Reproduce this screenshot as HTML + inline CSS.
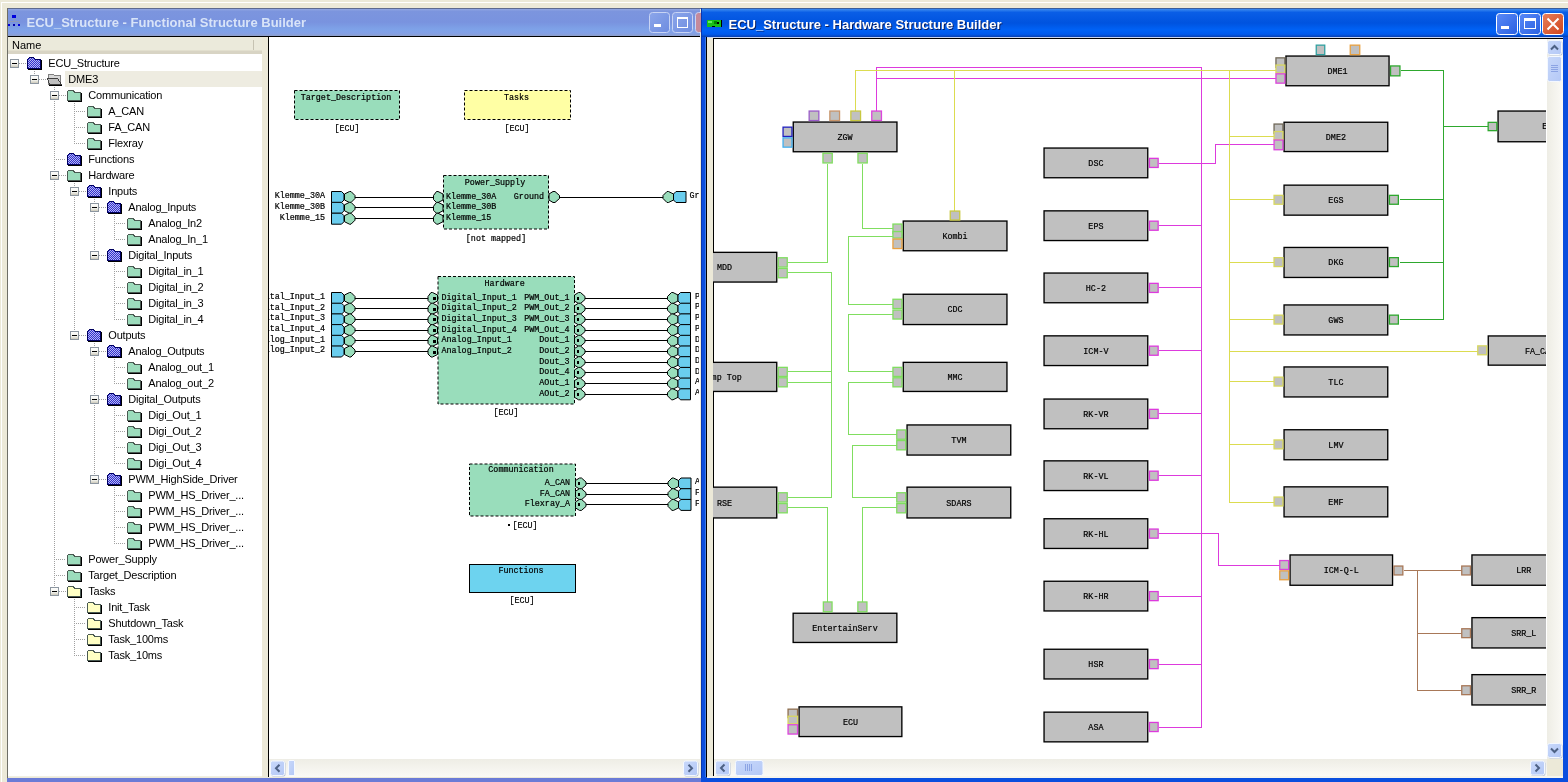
<!DOCTYPE html><html><head><meta charset="utf-8"><style>html,body{margin:0;padding:0;width:1568px;height:782px;overflow:hidden;background:#ECE9D8}svg{display:block;will-change:transform}text{white-space:pre}</style></head><body>
<svg width="1568" height="782" viewBox="0 0 1568 782" shape-rendering="crispEdges">
<defs>
<linearGradient id="tInact" x1="0" y1="0" x2="0" y2="1">
<stop offset="0" stop-color="#97ABE4"/><stop offset="0.1" stop-color="#7C95DE"/><stop offset="0.5" stop-color="#7993DF"/><stop offset="0.75" stop-color="#7EA2E8"/><stop offset="0.9" stop-color="#83A0E6"/><stop offset="1" stop-color="#8E9FCB"/>
</linearGradient>
<linearGradient id="tAct" x1="0" y1="0" x2="0" y2="1">
<stop offset="0" stop-color="#3D8CF0"/><stop offset="0.12" stop-color="#0A5EE6"/><stop offset="0.5" stop-color="#0053DF"/><stop offset="0.75" stop-color="#0062F6"/><stop offset="0.9" stop-color="#005AEE"/><stop offset="1" stop-color="#0840B0"/>
</linearGradient>
<linearGradient id="sbH" x1="0" y1="0" x2="0" y2="1">
<stop offset="0" stop-color="#EEEDE5"/><stop offset="1" stop-color="#FBFAF6"/>
</linearGradient>
<linearGradient id="sbV" x1="0" y1="0" x2="1" y2="0">
<stop offset="0" stop-color="#EEEDE5"/><stop offset="1" stop-color="#FBFAF6"/>
</linearGradient>
<linearGradient id="btn" x1="0" y1="0" x2="1" y2="1">
<stop offset="0" stop-color="#C8D8FA"/><stop offset="1" stop-color="#B4C8F6"/>
</linearGradient>
<linearGradient id="exp" x1="0" y1="0" x2="0" y2="1"><stop offset="0" stop-color="#FFFFFF"/><stop offset="0.6" stop-color="#F0F0EA"/><stop offset="1" stop-color="#C6C2B2"/></linearGradient>
<pattern id="hatch" width="2" height="2" patternUnits="userSpaceOnUse"><rect width="2" height="2" fill="#3030D0"/><rect width="1" height="1" fill="#B8B8F0"/><rect x="1" y="1" width="1" height="1" fill="#B8B8F0"/></pattern>
<clipPath id="clipTree"><rect x="8" y="53" width="254" height="723"/></clipPath>
<clipPath id="clipFD"><rect x="269" y="37" width="430" height="722"/></clipPath>
<clipPath id="clipHD"><rect x="713" y="39" width="833" height="720"/></clipPath>
<linearGradient id="minB" x1="0" y1="0" x2="1" y2="1"><stop offset="0" stop-color="#5A8AF8"/><stop offset="1" stop-color="#2A60E0"/></linearGradient>
<linearGradient id="clsB" x1="0" y1="0" x2="1" y2="1"><stop offset="0" stop-color="#E8805C"/><stop offset="1" stop-color="#D0441C"/></linearGradient>
<linearGradient id="minI" x1="0" y1="0" x2="1" y2="1"><stop offset="0" stop-color="#8CA6EA"/><stop offset="1" stop-color="#6D8CE0"/></linearGradient>
</defs>
<rect x="0" y="0" width="1568" height="782" fill="#ECE9D8" stroke="none" stroke-width="1" />
<line x1="1" y1="2.5" x2="1568" y2="2.5" stroke="#FFFFFF" stroke-width="1" />
<line x1="1.5" y1="2" x2="1.5" y2="782" stroke="#FFFFFF" stroke-width="1" />
<rect x="7" y="7.5" width="694" height="1" fill="#5E6A8E" stroke="none" stroke-width="1" />
<rect x="7" y="8" width="1" height="774" fill="#6E6E66" stroke="none" stroke-width="1" />
<rect x="8" y="8.5" width="692" height="27.5" fill="url(#tInact)" stroke="none" stroke-width="1" />
<rect x="8" y="36" width="692" height="1" fill="#000000" stroke="none" stroke-width="1" />
<rect x="12" y="15" width="4" height="3" fill="#0000DD" stroke="none" stroke-width="1" />
<rect x="8" y="24" width="2" height="2" fill="#0000DD" stroke="none" stroke-width="1" />
<rect x="13" y="24" width="2" height="2" fill="#0000AA" stroke="none" stroke-width="1" />
<rect x="18" y="24" width="2" height="2" fill="#0000DD" stroke="none" stroke-width="1" />
<line x1="9" y1="21.5" x2="19" y2="21.5" stroke="#8C9AB8" stroke-width="1" />
<line x1="14" y1="18" x2="14" y2="21" stroke="#8C9AB8" stroke-width="1" />
<line x1="9" y1="21" x2="9" y2="24" stroke="#8C9AB8" stroke-width="1" />
<line x1="19" y1="21" x2="19" y2="24" stroke="#8C9AB8" stroke-width="1" />
<text x="26.5" y="27" font-family="Liberation Sans" font-size="13" font-weight="bold" text-anchor="start" fill="#D8E4F8" >ECU_Structure - Functional Structure Builder</text>
<rect x="649.5" y="12.5" width="20" height="20" rx="3" fill="url(#minI)" stroke="#C8D4F4" stroke-width="1" shape-rendering="geometricPrecision"/>
<rect x="672.5" y="12.5" width="20" height="20" rx="3" fill="url(#minI)" stroke="#C8D4F4" stroke-width="1" shape-rendering="geometricPrecision"/>
<rect x="695.5" y="12.5" width="20" height="20" rx="3" fill="#C48A9C" stroke="#C8D4F4" stroke-width="1" shape-rendering="geometricPrecision"/>
<rect x="654" y="24" width="7" height="3" fill="#FFFFFF" stroke="none" stroke-width="1" />
<rect x="677.5" y="17.5" width="10" height="10" fill="none" stroke="#FFFFFF" stroke-width="1"/>
<rect x="677" y="17" width="11" height="2" fill="#FFFFFF" stroke="none" stroke-width="1" />
<rect x="8" y="37" width="254" height="17" fill="#EBEADB" stroke="none" stroke-width="1" />
<rect x="8" y="50" width="254" height="1" fill="#E2DFCE" stroke="none" stroke-width="1" />
<rect x="8" y="51" width="254" height="3" fill="#D8D4C4" stroke="none" stroke-width="1" />
<line x1="253.5" y1="40" x2="253.5" y2="50" stroke="#C6C3B2" stroke-width="1" />
<text x="12" y="49" font-family="Liberation Sans" font-size="11" font-weight="normal" text-anchor="start" fill="#000" >Name</text>
<rect x="8" y="54" width="254" height="722" fill="#FFFFFF" stroke="none" stroke-width="1" />
<rect x="8" y="776" width="254" height="1" fill="#F1EFE2" stroke="none" stroke-width="1" />
<rect x="262" y="37" width="6" height="740" fill="#ECE9D8" stroke="none" stroke-width="1" />
<rect x="268" y="37" width="1" height="740" fill="#000000" stroke="none" stroke-width="1" />
<rect x="7" y="777.5" width="694" height="5" fill="#6B7BD6" stroke="none" stroke-width="1" />
<g clip-path="url(#clipTree)">
<rect x="65" y="71" width="197" height="16" fill="#EEECE1" stroke="none" stroke-width="1" />
<line x1="34.5" y1="69" x2="34.5" y2="79.5" stroke="#A0A0A0" stroke-width="1" stroke-dasharray="1,1"/>
<line x1="19" y1="63.5" x2="26" y2="63.5" stroke="#A0A0A0" stroke-width="1" stroke-dasharray="1,1"/>
<line x1="54.5" y1="85" x2="54.5" y2="591.5" stroke="#A0A0A0" stroke-width="1" stroke-dasharray="1,1"/>
<line x1="39" y1="79.5" x2="46" y2="79.5" stroke="#A0A0A0" stroke-width="1" stroke-dasharray="1,1"/>
<line x1="74.5" y1="101" x2="74.5" y2="143.5" stroke="#A0A0A0" stroke-width="1" stroke-dasharray="1,1"/>
<line x1="59" y1="95.5" x2="66" y2="95.5" stroke="#A0A0A0" stroke-width="1" stroke-dasharray="1,1"/>
<line x1="74" y1="111.5" x2="86" y2="111.5" stroke="#A0A0A0" stroke-width="1" stroke-dasharray="1,1"/>
<line x1="74" y1="127.5" x2="86" y2="127.5" stroke="#A0A0A0" stroke-width="1" stroke-dasharray="1,1"/>
<line x1="74" y1="143.5" x2="86" y2="143.5" stroke="#A0A0A0" stroke-width="1" stroke-dasharray="1,1"/>
<line x1="54" y1="159.5" x2="66" y2="159.5" stroke="#A0A0A0" stroke-width="1" stroke-dasharray="1,1"/>
<line x1="74.5" y1="181" x2="74.5" y2="335.5" stroke="#A0A0A0" stroke-width="1" stroke-dasharray="1,1"/>
<line x1="59" y1="175.5" x2="66" y2="175.5" stroke="#A0A0A0" stroke-width="1" stroke-dasharray="1,1"/>
<line x1="94.5" y1="197" x2="94.5" y2="255.5" stroke="#A0A0A0" stroke-width="1" stroke-dasharray="1,1"/>
<line x1="79" y1="191.5" x2="86" y2="191.5" stroke="#A0A0A0" stroke-width="1" stroke-dasharray="1,1"/>
<line x1="114.5" y1="213" x2="114.5" y2="239.5" stroke="#A0A0A0" stroke-width="1" stroke-dasharray="1,1"/>
<line x1="99" y1="207.5" x2="106" y2="207.5" stroke="#A0A0A0" stroke-width="1" stroke-dasharray="1,1"/>
<line x1="114" y1="223.5" x2="126" y2="223.5" stroke="#A0A0A0" stroke-width="1" stroke-dasharray="1,1"/>
<line x1="114" y1="239.5" x2="126" y2="239.5" stroke="#A0A0A0" stroke-width="1" stroke-dasharray="1,1"/>
<line x1="114.5" y1="261" x2="114.5" y2="319.5" stroke="#A0A0A0" stroke-width="1" stroke-dasharray="1,1"/>
<line x1="99" y1="255.5" x2="106" y2="255.5" stroke="#A0A0A0" stroke-width="1" stroke-dasharray="1,1"/>
<line x1="114" y1="271.5" x2="126" y2="271.5" stroke="#A0A0A0" stroke-width="1" stroke-dasharray="1,1"/>
<line x1="114" y1="287.5" x2="126" y2="287.5" stroke="#A0A0A0" stroke-width="1" stroke-dasharray="1,1"/>
<line x1="114" y1="303.5" x2="126" y2="303.5" stroke="#A0A0A0" stroke-width="1" stroke-dasharray="1,1"/>
<line x1="114" y1="319.5" x2="126" y2="319.5" stroke="#A0A0A0" stroke-width="1" stroke-dasharray="1,1"/>
<line x1="94.5" y1="341" x2="94.5" y2="479.5" stroke="#A0A0A0" stroke-width="1" stroke-dasharray="1,1"/>
<line x1="79" y1="335.5" x2="86" y2="335.5" stroke="#A0A0A0" stroke-width="1" stroke-dasharray="1,1"/>
<line x1="114.5" y1="357" x2="114.5" y2="383.5" stroke="#A0A0A0" stroke-width="1" stroke-dasharray="1,1"/>
<line x1="99" y1="351.5" x2="106" y2="351.5" stroke="#A0A0A0" stroke-width="1" stroke-dasharray="1,1"/>
<line x1="114" y1="367.5" x2="126" y2="367.5" stroke="#A0A0A0" stroke-width="1" stroke-dasharray="1,1"/>
<line x1="114" y1="383.5" x2="126" y2="383.5" stroke="#A0A0A0" stroke-width="1" stroke-dasharray="1,1"/>
<line x1="114.5" y1="405" x2="114.5" y2="463.5" stroke="#A0A0A0" stroke-width="1" stroke-dasharray="1,1"/>
<line x1="99" y1="399.5" x2="106" y2="399.5" stroke="#A0A0A0" stroke-width="1" stroke-dasharray="1,1"/>
<line x1="114" y1="415.5" x2="126" y2="415.5" stroke="#A0A0A0" stroke-width="1" stroke-dasharray="1,1"/>
<line x1="114" y1="431.5" x2="126" y2="431.5" stroke="#A0A0A0" stroke-width="1" stroke-dasharray="1,1"/>
<line x1="114" y1="447.5" x2="126" y2="447.5" stroke="#A0A0A0" stroke-width="1" stroke-dasharray="1,1"/>
<line x1="114" y1="463.5" x2="126" y2="463.5" stroke="#A0A0A0" stroke-width="1" stroke-dasharray="1,1"/>
<line x1="114.5" y1="485" x2="114.5" y2="543.5" stroke="#A0A0A0" stroke-width="1" stroke-dasharray="1,1"/>
<line x1="99" y1="479.5" x2="106" y2="479.5" stroke="#A0A0A0" stroke-width="1" stroke-dasharray="1,1"/>
<line x1="114" y1="495.5" x2="126" y2="495.5" stroke="#A0A0A0" stroke-width="1" stroke-dasharray="1,1"/>
<line x1="114" y1="511.5" x2="126" y2="511.5" stroke="#A0A0A0" stroke-width="1" stroke-dasharray="1,1"/>
<line x1="114" y1="527.5" x2="126" y2="527.5" stroke="#A0A0A0" stroke-width="1" stroke-dasharray="1,1"/>
<line x1="114" y1="543.5" x2="126" y2="543.5" stroke="#A0A0A0" stroke-width="1" stroke-dasharray="1,1"/>
<line x1="54" y1="559.5" x2="66" y2="559.5" stroke="#A0A0A0" stroke-width="1" stroke-dasharray="1,1"/>
<line x1="54" y1="575.5" x2="66" y2="575.5" stroke="#A0A0A0" stroke-width="1" stroke-dasharray="1,1"/>
<line x1="74.5" y1="597" x2="74.5" y2="655.5" stroke="#A0A0A0" stroke-width="1" stroke-dasharray="1,1"/>
<line x1="59" y1="591.5" x2="66" y2="591.5" stroke="#A0A0A0" stroke-width="1" stroke-dasharray="1,1"/>
<line x1="74" y1="607.5" x2="86" y2="607.5" stroke="#A0A0A0" stroke-width="1" stroke-dasharray="1,1"/>
<line x1="74" y1="623.5" x2="86" y2="623.5" stroke="#A0A0A0" stroke-width="1" stroke-dasharray="1,1"/>
<line x1="74" y1="639.5" x2="86" y2="639.5" stroke="#A0A0A0" stroke-width="1" stroke-dasharray="1,1"/>
<line x1="74" y1="655.5" x2="86" y2="655.5" stroke="#A0A0A0" stroke-width="1" stroke-dasharray="1,1"/>
<rect x="10.5" y="59.5" width="8" height="8" fill="url(#exp)" stroke="#8C96A0" stroke-width="1"/>
<rect x="12" y="63" width="5" height="1" fill="#000" stroke="none" stroke-width="1" />
<path d="M27.5,68.5 V59.5 L29.5,57.5 H33.5 L35.5,59.5 H40.5 V68.5 Z" fill="url(#hatch)" stroke="#000060" stroke-width="1"/>
<rect x="28" y="69" width="14" height="1" fill="#000" stroke="none" stroke-width="1" />
<rect x="41" y="60" width="1" height="10" fill="#000" stroke="none" stroke-width="1" />
<text x="48.3" y="67" font-family="Liberation Sans" font-size="11" font-weight="normal" text-anchor="start" fill="#000" letter-spacing="-0.2">ECU_Structure</text>
<rect x="30.5" y="75.5" width="8" height="8" fill="url(#exp)" stroke="#8C96A0" stroke-width="1"/>
<rect x="32" y="79" width="5" height="1" fill="#000" stroke="none" stroke-width="1" />
<path d="M48.5,84.5 V74.5 H53.5 L54.5,75.5 H60.5 V84.5 Z" fill="#D8D8D8" stroke="#808080" stroke-width="1"/>
<path d="M47.5,78.5 H57.5 L61.5,84.5 H49.5 Z" fill="#C0C0C0" stroke="#404040" stroke-width="1"/>
<rect x="49" y="85" width="13" height="1" fill="#000" stroke="none" stroke-width="1" />
<text x="68.3" y="83" font-family="Liberation Sans" font-size="11" font-weight="normal" text-anchor="start" fill="#000" letter-spacing="-0.2">DME3</text>
<rect x="50.5" y="91.5" width="8" height="8" fill="url(#exp)" stroke="#8C96A0" stroke-width="1"/>
<rect x="52" y="95" width="5" height="1" fill="#000" stroke="none" stroke-width="1" />
<path d="M67.5,100.5 V91.5 L68.5,90.5 H73.5 L74.5,92.5 H80.5 V100.5 Z" fill="#9CDCBC" stroke="#4A5A52" stroke-width="1"/>
<rect x="68" y="101" width="14" height="1" fill="#000" stroke="none" stroke-width="1" />
<rect x="81" y="93" width="1" height="9" fill="#000" stroke="none" stroke-width="1" />
<text x="88.3" y="99" font-family="Liberation Sans" font-size="11" font-weight="normal" text-anchor="start" fill="#000" letter-spacing="-0.2">Communication</text>
<path d="M87.5,116.5 V107.5 L88.5,106.5 H93.5 L94.5,108.5 H100.5 V116.5 Z" fill="#9CDCBC" stroke="#4A5A52" stroke-width="1"/>
<rect x="88" y="117" width="14" height="1" fill="#000" stroke="none" stroke-width="1" />
<rect x="101" y="109" width="1" height="9" fill="#000" stroke="none" stroke-width="1" />
<text x="108.3" y="115" font-family="Liberation Sans" font-size="11" font-weight="normal" text-anchor="start" fill="#000" letter-spacing="-0.2">A_CAN</text>
<path d="M87.5,132.5 V123.5 L88.5,122.5 H93.5 L94.5,124.5 H100.5 V132.5 Z" fill="#9CDCBC" stroke="#4A5A52" stroke-width="1"/>
<rect x="88" y="133" width="14" height="1" fill="#000" stroke="none" stroke-width="1" />
<rect x="101" y="125" width="1" height="9" fill="#000" stroke="none" stroke-width="1" />
<text x="108.3" y="131" font-family="Liberation Sans" font-size="11" font-weight="normal" text-anchor="start" fill="#000" letter-spacing="-0.2">FA_CAN</text>
<path d="M87.5,148.5 V139.5 L88.5,138.5 H93.5 L94.5,140.5 H100.5 V148.5 Z" fill="#9CDCBC" stroke="#4A5A52" stroke-width="1"/>
<rect x="88" y="149" width="14" height="1" fill="#000" stroke="none" stroke-width="1" />
<rect x="101" y="141" width="1" height="9" fill="#000" stroke="none" stroke-width="1" />
<text x="108.3" y="147" font-family="Liberation Sans" font-size="11" font-weight="normal" text-anchor="start" fill="#000" letter-spacing="-0.2">Flexray</text>
<path d="M67.5,164.5 V155.5 L69.5,153.5 H73.5 L75.5,155.5 H80.5 V164.5 Z" fill="url(#hatch)" stroke="#000060" stroke-width="1"/>
<rect x="68" y="165" width="14" height="1" fill="#000" stroke="none" stroke-width="1" />
<rect x="81" y="156" width="1" height="10" fill="#000" stroke="none" stroke-width="1" />
<text x="88.3" y="163" font-family="Liberation Sans" font-size="11" font-weight="normal" text-anchor="start" fill="#000" letter-spacing="-0.2">Functions</text>
<rect x="50.5" y="171.5" width="8" height="8" fill="url(#exp)" stroke="#8C96A0" stroke-width="1"/>
<rect x="52" y="175" width="5" height="1" fill="#000" stroke="none" stroke-width="1" />
<path d="M67.5,180.5 V171.5 L68.5,170.5 H73.5 L74.5,172.5 H80.5 V180.5 Z" fill="#9CDCBC" stroke="#4A5A52" stroke-width="1"/>
<rect x="68" y="181" width="14" height="1" fill="#000" stroke="none" stroke-width="1" />
<rect x="81" y="173" width="1" height="9" fill="#000" stroke="none" stroke-width="1" />
<text x="88.3" y="179" font-family="Liberation Sans" font-size="11" font-weight="normal" text-anchor="start" fill="#000" letter-spacing="-0.2">Hardware</text>
<rect x="70.5" y="187.5" width="8" height="8" fill="url(#exp)" stroke="#8C96A0" stroke-width="1"/>
<rect x="72" y="191" width="5" height="1" fill="#000" stroke="none" stroke-width="1" />
<path d="M87.5,196.5 V187.5 L89.5,185.5 H93.5 L95.5,187.5 H100.5 V196.5 Z" fill="url(#hatch)" stroke="#000060" stroke-width="1"/>
<rect x="88" y="197" width="14" height="1" fill="#000" stroke="none" stroke-width="1" />
<rect x="101" y="188" width="1" height="10" fill="#000" stroke="none" stroke-width="1" />
<text x="108.3" y="195" font-family="Liberation Sans" font-size="11" font-weight="normal" text-anchor="start" fill="#000" letter-spacing="-0.2">Inputs</text>
<rect x="90.5" y="203.5" width="8" height="8" fill="url(#exp)" stroke="#8C96A0" stroke-width="1"/>
<rect x="92" y="207" width="5" height="1" fill="#000" stroke="none" stroke-width="1" />
<path d="M107.5,212.5 V203.5 L109.5,201.5 H113.5 L115.5,203.5 H120.5 V212.5 Z" fill="url(#hatch)" stroke="#000060" stroke-width="1"/>
<rect x="108" y="213" width="14" height="1" fill="#000" stroke="none" stroke-width="1" />
<rect x="121" y="204" width="1" height="10" fill="#000" stroke="none" stroke-width="1" />
<text x="128.3" y="211" font-family="Liberation Sans" font-size="11" font-weight="normal" text-anchor="start" fill="#000" letter-spacing="-0.2">Analog_Inputs</text>
<path d="M127.5,228.5 V219.5 L128.5,218.5 H133.5 L134.5,220.5 H140.5 V228.5 Z" fill="#9CDCBC" stroke="#4A5A52" stroke-width="1"/>
<rect x="128" y="229" width="14" height="1" fill="#000" stroke="none" stroke-width="1" />
<rect x="141" y="221" width="1" height="9" fill="#000" stroke="none" stroke-width="1" />
<text x="148.3" y="227" font-family="Liberation Sans" font-size="11" font-weight="normal" text-anchor="start" fill="#000" letter-spacing="-0.2">Analog_In2</text>
<path d="M127.5,244.5 V235.5 L128.5,234.5 H133.5 L134.5,236.5 H140.5 V244.5 Z" fill="#9CDCBC" stroke="#4A5A52" stroke-width="1"/>
<rect x="128" y="245" width="14" height="1" fill="#000" stroke="none" stroke-width="1" />
<rect x="141" y="237" width="1" height="9" fill="#000" stroke="none" stroke-width="1" />
<text x="148.3" y="243" font-family="Liberation Sans" font-size="11" font-weight="normal" text-anchor="start" fill="#000" letter-spacing="-0.2">Analog_In_1</text>
<rect x="90.5" y="251.5" width="8" height="8" fill="url(#exp)" stroke="#8C96A0" stroke-width="1"/>
<rect x="92" y="255" width="5" height="1" fill="#000" stroke="none" stroke-width="1" />
<path d="M107.5,260.5 V251.5 L109.5,249.5 H113.5 L115.5,251.5 H120.5 V260.5 Z" fill="url(#hatch)" stroke="#000060" stroke-width="1"/>
<rect x="108" y="261" width="14" height="1" fill="#000" stroke="none" stroke-width="1" />
<rect x="121" y="252" width="1" height="10" fill="#000" stroke="none" stroke-width="1" />
<text x="128.3" y="259" font-family="Liberation Sans" font-size="11" font-weight="normal" text-anchor="start" fill="#000" letter-spacing="-0.2">Digital_Inputs</text>
<path d="M127.5,276.5 V267.5 L128.5,266.5 H133.5 L134.5,268.5 H140.5 V276.5 Z" fill="#9CDCBC" stroke="#4A5A52" stroke-width="1"/>
<rect x="128" y="277" width="14" height="1" fill="#000" stroke="none" stroke-width="1" />
<rect x="141" y="269" width="1" height="9" fill="#000" stroke="none" stroke-width="1" />
<text x="148.3" y="275" font-family="Liberation Sans" font-size="11" font-weight="normal" text-anchor="start" fill="#000" letter-spacing="-0.2">Digital_in_1</text>
<path d="M127.5,292.5 V283.5 L128.5,282.5 H133.5 L134.5,284.5 H140.5 V292.5 Z" fill="#9CDCBC" stroke="#4A5A52" stroke-width="1"/>
<rect x="128" y="293" width="14" height="1" fill="#000" stroke="none" stroke-width="1" />
<rect x="141" y="285" width="1" height="9" fill="#000" stroke="none" stroke-width="1" />
<text x="148.3" y="291" font-family="Liberation Sans" font-size="11" font-weight="normal" text-anchor="start" fill="#000" letter-spacing="-0.2">Digital_in_2</text>
<path d="M127.5,308.5 V299.5 L128.5,298.5 H133.5 L134.5,300.5 H140.5 V308.5 Z" fill="#9CDCBC" stroke="#4A5A52" stroke-width="1"/>
<rect x="128" y="309" width="14" height="1" fill="#000" stroke="none" stroke-width="1" />
<rect x="141" y="301" width="1" height="9" fill="#000" stroke="none" stroke-width="1" />
<text x="148.3" y="307" font-family="Liberation Sans" font-size="11" font-weight="normal" text-anchor="start" fill="#000" letter-spacing="-0.2">Digital_in_3</text>
<path d="M127.5,324.5 V315.5 L128.5,314.5 H133.5 L134.5,316.5 H140.5 V324.5 Z" fill="#9CDCBC" stroke="#4A5A52" stroke-width="1"/>
<rect x="128" y="325" width="14" height="1" fill="#000" stroke="none" stroke-width="1" />
<rect x="141" y="317" width="1" height="9" fill="#000" stroke="none" stroke-width="1" />
<text x="148.3" y="323" font-family="Liberation Sans" font-size="11" font-weight="normal" text-anchor="start" fill="#000" letter-spacing="-0.2">Digital_in_4</text>
<rect x="70.5" y="331.5" width="8" height="8" fill="url(#exp)" stroke="#8C96A0" stroke-width="1"/>
<rect x="72" y="335" width="5" height="1" fill="#000" stroke="none" stroke-width="1" />
<path d="M87.5,340.5 V331.5 L89.5,329.5 H93.5 L95.5,331.5 H100.5 V340.5 Z" fill="url(#hatch)" stroke="#000060" stroke-width="1"/>
<rect x="88" y="341" width="14" height="1" fill="#000" stroke="none" stroke-width="1" />
<rect x="101" y="332" width="1" height="10" fill="#000" stroke="none" stroke-width="1" />
<text x="108.3" y="339" font-family="Liberation Sans" font-size="11" font-weight="normal" text-anchor="start" fill="#000" letter-spacing="-0.2">Outputs</text>
<rect x="90.5" y="347.5" width="8" height="8" fill="url(#exp)" stroke="#8C96A0" stroke-width="1"/>
<rect x="92" y="351" width="5" height="1" fill="#000" stroke="none" stroke-width="1" />
<path d="M107.5,356.5 V347.5 L109.5,345.5 H113.5 L115.5,347.5 H120.5 V356.5 Z" fill="url(#hatch)" stroke="#000060" stroke-width="1"/>
<rect x="108" y="357" width="14" height="1" fill="#000" stroke="none" stroke-width="1" />
<rect x="121" y="348" width="1" height="10" fill="#000" stroke="none" stroke-width="1" />
<text x="128.3" y="355" font-family="Liberation Sans" font-size="11" font-weight="normal" text-anchor="start" fill="#000" letter-spacing="-0.2">Analog_Outputs</text>
<path d="M127.5,372.5 V363.5 L128.5,362.5 H133.5 L134.5,364.5 H140.5 V372.5 Z" fill="#9CDCBC" stroke="#4A5A52" stroke-width="1"/>
<rect x="128" y="373" width="14" height="1" fill="#000" stroke="none" stroke-width="1" />
<rect x="141" y="365" width="1" height="9" fill="#000" stroke="none" stroke-width="1" />
<text x="148.3" y="371" font-family="Liberation Sans" font-size="11" font-weight="normal" text-anchor="start" fill="#000" letter-spacing="-0.2">Analog_out_1</text>
<path d="M127.5,388.5 V379.5 L128.5,378.5 H133.5 L134.5,380.5 H140.5 V388.5 Z" fill="#9CDCBC" stroke="#4A5A52" stroke-width="1"/>
<rect x="128" y="389" width="14" height="1" fill="#000" stroke="none" stroke-width="1" />
<rect x="141" y="381" width="1" height="9" fill="#000" stroke="none" stroke-width="1" />
<text x="148.3" y="387" font-family="Liberation Sans" font-size="11" font-weight="normal" text-anchor="start" fill="#000" letter-spacing="-0.2">Analog_out_2</text>
<rect x="90.5" y="395.5" width="8" height="8" fill="url(#exp)" stroke="#8C96A0" stroke-width="1"/>
<rect x="92" y="399" width="5" height="1" fill="#000" stroke="none" stroke-width="1" />
<path d="M107.5,404.5 V395.5 L109.5,393.5 H113.5 L115.5,395.5 H120.5 V404.5 Z" fill="url(#hatch)" stroke="#000060" stroke-width="1"/>
<rect x="108" y="405" width="14" height="1" fill="#000" stroke="none" stroke-width="1" />
<rect x="121" y="396" width="1" height="10" fill="#000" stroke="none" stroke-width="1" />
<text x="128.3" y="403" font-family="Liberation Sans" font-size="11" font-weight="normal" text-anchor="start" fill="#000" letter-spacing="-0.2">Digital_Outputs</text>
<path d="M127.5,420.5 V411.5 L128.5,410.5 H133.5 L134.5,412.5 H140.5 V420.5 Z" fill="#9CDCBC" stroke="#4A5A52" stroke-width="1"/>
<rect x="128" y="421" width="14" height="1" fill="#000" stroke="none" stroke-width="1" />
<rect x="141" y="413" width="1" height="9" fill="#000" stroke="none" stroke-width="1" />
<text x="148.3" y="419" font-family="Liberation Sans" font-size="11" font-weight="normal" text-anchor="start" fill="#000" letter-spacing="-0.2">Digi_Out_1</text>
<path d="M127.5,436.5 V427.5 L128.5,426.5 H133.5 L134.5,428.5 H140.5 V436.5 Z" fill="#9CDCBC" stroke="#4A5A52" stroke-width="1"/>
<rect x="128" y="437" width="14" height="1" fill="#000" stroke="none" stroke-width="1" />
<rect x="141" y="429" width="1" height="9" fill="#000" stroke="none" stroke-width="1" />
<text x="148.3" y="435" font-family="Liberation Sans" font-size="11" font-weight="normal" text-anchor="start" fill="#000" letter-spacing="-0.2">Digi_Out_2</text>
<path d="M127.5,452.5 V443.5 L128.5,442.5 H133.5 L134.5,444.5 H140.5 V452.5 Z" fill="#9CDCBC" stroke="#4A5A52" stroke-width="1"/>
<rect x="128" y="453" width="14" height="1" fill="#000" stroke="none" stroke-width="1" />
<rect x="141" y="445" width="1" height="9" fill="#000" stroke="none" stroke-width="1" />
<text x="148.3" y="451" font-family="Liberation Sans" font-size="11" font-weight="normal" text-anchor="start" fill="#000" letter-spacing="-0.2">Digi_Out_3</text>
<path d="M127.5,468.5 V459.5 L128.5,458.5 H133.5 L134.5,460.5 H140.5 V468.5 Z" fill="#9CDCBC" stroke="#4A5A52" stroke-width="1"/>
<rect x="128" y="469" width="14" height="1" fill="#000" stroke="none" stroke-width="1" />
<rect x="141" y="461" width="1" height="9" fill="#000" stroke="none" stroke-width="1" />
<text x="148.3" y="467" font-family="Liberation Sans" font-size="11" font-weight="normal" text-anchor="start" fill="#000" letter-spacing="-0.2">Digi_Out_4</text>
<rect x="90.5" y="475.5" width="8" height="8" fill="url(#exp)" stroke="#8C96A0" stroke-width="1"/>
<rect x="92" y="479" width="5" height="1" fill="#000" stroke="none" stroke-width="1" />
<path d="M107.5,484.5 V475.5 L109.5,473.5 H113.5 L115.5,475.5 H120.5 V484.5 Z" fill="url(#hatch)" stroke="#000060" stroke-width="1"/>
<rect x="108" y="485" width="14" height="1" fill="#000" stroke="none" stroke-width="1" />
<rect x="121" y="476" width="1" height="10" fill="#000" stroke="none" stroke-width="1" />
<text x="128.3" y="483" font-family="Liberation Sans" font-size="11" font-weight="normal" text-anchor="start" fill="#000" letter-spacing="-0.2">PWM_HighSide_Driver</text>
<path d="M127.5,500.5 V491.5 L128.5,490.5 H133.5 L134.5,492.5 H140.5 V500.5 Z" fill="#9CDCBC" stroke="#4A5A52" stroke-width="1"/>
<rect x="128" y="501" width="14" height="1" fill="#000" stroke="none" stroke-width="1" />
<rect x="141" y="493" width="1" height="9" fill="#000" stroke="none" stroke-width="1" />
<text x="148.3" y="499" font-family="Liberation Sans" font-size="11" font-weight="normal" text-anchor="start" fill="#000" letter-spacing="-0.2">PWM_HS_Driver_...</text>
<path d="M127.5,516.5 V507.5 L128.5,506.5 H133.5 L134.5,508.5 H140.5 V516.5 Z" fill="#9CDCBC" stroke="#4A5A52" stroke-width="1"/>
<rect x="128" y="517" width="14" height="1" fill="#000" stroke="none" stroke-width="1" />
<rect x="141" y="509" width="1" height="9" fill="#000" stroke="none" stroke-width="1" />
<text x="148.3" y="515" font-family="Liberation Sans" font-size="11" font-weight="normal" text-anchor="start" fill="#000" letter-spacing="-0.2">PWM_HS_Driver_...</text>
<path d="M127.5,532.5 V523.5 L128.5,522.5 H133.5 L134.5,524.5 H140.5 V532.5 Z" fill="#9CDCBC" stroke="#4A5A52" stroke-width="1"/>
<rect x="128" y="533" width="14" height="1" fill="#000" stroke="none" stroke-width="1" />
<rect x="141" y="525" width="1" height="9" fill="#000" stroke="none" stroke-width="1" />
<text x="148.3" y="531" font-family="Liberation Sans" font-size="11" font-weight="normal" text-anchor="start" fill="#000" letter-spacing="-0.2">PWM_HS_Driver_...</text>
<path d="M127.5,548.5 V539.5 L128.5,538.5 H133.5 L134.5,540.5 H140.5 V548.5 Z" fill="#9CDCBC" stroke="#4A5A52" stroke-width="1"/>
<rect x="128" y="549" width="14" height="1" fill="#000" stroke="none" stroke-width="1" />
<rect x="141" y="541" width="1" height="9" fill="#000" stroke="none" stroke-width="1" />
<text x="148.3" y="547" font-family="Liberation Sans" font-size="11" font-weight="normal" text-anchor="start" fill="#000" letter-spacing="-0.2">PWM_HS_Driver_...</text>
<path d="M67.5,564.5 V555.5 L68.5,554.5 H73.5 L74.5,556.5 H80.5 V564.5 Z" fill="#9CDCBC" stroke="#4A5A52" stroke-width="1"/>
<rect x="68" y="565" width="14" height="1" fill="#000" stroke="none" stroke-width="1" />
<rect x="81" y="557" width="1" height="9" fill="#000" stroke="none" stroke-width="1" />
<text x="88.3" y="563" font-family="Liberation Sans" font-size="11" font-weight="normal" text-anchor="start" fill="#000" letter-spacing="-0.2">Power_Supply</text>
<path d="M67.5,580.5 V571.5 L68.5,570.5 H73.5 L74.5,572.5 H80.5 V580.5 Z" fill="#9CDCBC" stroke="#4A5A52" stroke-width="1"/>
<rect x="68" y="581" width="14" height="1" fill="#000" stroke="none" stroke-width="1" />
<rect x="81" y="573" width="1" height="9" fill="#000" stroke="none" stroke-width="1" />
<text x="88.3" y="579" font-family="Liberation Sans" font-size="11" font-weight="normal" text-anchor="start" fill="#000" letter-spacing="-0.2">Target_Description</text>
<rect x="50.5" y="587.5" width="8" height="8" fill="url(#exp)" stroke="#8C96A0" stroke-width="1"/>
<rect x="52" y="591" width="5" height="1" fill="#000" stroke="none" stroke-width="1" />
<path d="M67.5,596.5 V587.5 L68.5,586.5 H73.5 L74.5,588.5 H80.5 V596.5 Z" fill="#FFFFC4" stroke="#4A5A52" stroke-width="1"/>
<rect x="68" y="597" width="14" height="1" fill="#000" stroke="none" stroke-width="1" />
<rect x="81" y="589" width="1" height="9" fill="#000" stroke="none" stroke-width="1" />
<text x="88.3" y="595" font-family="Liberation Sans" font-size="11" font-weight="normal" text-anchor="start" fill="#000" letter-spacing="-0.2">Tasks</text>
<path d="M87.5,612.5 V603.5 L88.5,602.5 H93.5 L94.5,604.5 H100.5 V612.5 Z" fill="#FFFFC4" stroke="#4A5A52" stroke-width="1"/>
<rect x="88" y="613" width="14" height="1" fill="#000" stroke="none" stroke-width="1" />
<rect x="101" y="605" width="1" height="9" fill="#000" stroke="none" stroke-width="1" />
<text x="108.3" y="611" font-family="Liberation Sans" font-size="11" font-weight="normal" text-anchor="start" fill="#000" letter-spacing="-0.2">Init_Task</text>
<path d="M87.5,628.5 V619.5 L88.5,618.5 H93.5 L94.5,620.5 H100.5 V628.5 Z" fill="#FFFFC4" stroke="#4A5A52" stroke-width="1"/>
<rect x="88" y="629" width="14" height="1" fill="#000" stroke="none" stroke-width="1" />
<rect x="101" y="621" width="1" height="9" fill="#000" stroke="none" stroke-width="1" />
<text x="108.3" y="627" font-family="Liberation Sans" font-size="11" font-weight="normal" text-anchor="start" fill="#000" letter-spacing="-0.2">Shutdown_Task</text>
<path d="M87.5,644.5 V635.5 L88.5,634.5 H93.5 L94.5,636.5 H100.5 V644.5 Z" fill="#FFFFC4" stroke="#4A5A52" stroke-width="1"/>
<rect x="88" y="645" width="14" height="1" fill="#000" stroke="none" stroke-width="1" />
<rect x="101" y="637" width="1" height="9" fill="#000" stroke="none" stroke-width="1" />
<text x="108.3" y="643" font-family="Liberation Sans" font-size="11" font-weight="normal" text-anchor="start" fill="#000" letter-spacing="-0.2">Task_100ms</text>
<path d="M87.5,660.5 V651.5 L88.5,650.5 H93.5 L94.5,652.5 H100.5 V660.5 Z" fill="#FFFFC4" stroke="#4A5A52" stroke-width="1"/>
<rect x="88" y="661" width="14" height="1" fill="#000" stroke="none" stroke-width="1" />
<rect x="101" y="653" width="1" height="9" fill="#000" stroke="none" stroke-width="1" />
<text x="108.3" y="659" font-family="Liberation Sans" font-size="11" font-weight="normal" text-anchor="start" fill="#000" letter-spacing="-0.2">Task_10ms</text>
</g>
<rect x="269" y="37" width="431" height="722" fill="#FFFFFF" stroke="none" stroke-width="1" />
<g clip-path="url(#clipFD)" shape-rendering="geometricPrecision">
<rect x="294.5" y="90.5" width="105" height="29" fill="#99DDBB" stroke="#000" stroke-width="1" stroke-dasharray="3,2"/>
<text x="346" y="99.7" font-family="Liberation Mono" font-size="8.4" font-weight="normal" text-anchor="middle" fill="#000" stroke="#000" stroke-width="0.2">Target_Description</text>
<text x="347" y="131" font-family="Liberation Mono" font-size="8.4" font-weight="normal" text-anchor="middle" fill="#000" stroke="#000" stroke-width="0.2">[ECU]</text>
<rect x="464.5" y="90.5" width="106" height="29" fill="#FFFFA4" stroke="#000" stroke-width="1" stroke-dasharray="3,2"/>
<text x="516.5" y="99.7" font-family="Liberation Mono" font-size="8.4" font-weight="normal" text-anchor="middle" fill="#000" stroke="#000" stroke-width="0.2">Tasks</text>
<text x="517" y="131" font-family="Liberation Mono" font-size="8.4" font-weight="normal" text-anchor="middle" fill="#000" stroke="#000" stroke-width="0.2">[ECU]</text>
<rect x="443.5" y="175.5" width="105" height="53.5" fill="#99DDBB" stroke="#000" stroke-width="1" stroke-dasharray="3,2"/>
<text x="495" y="184.7" font-family="Liberation Mono" font-size="8.4" font-weight="normal" text-anchor="middle" fill="#000" stroke="#000" stroke-width="0.2">Power_Supply</text>
<polygon points="331.5,191.5 341.5,191.5 344.0,194.0 344.0,200.0 341.5,202.5 331.5,202.5" fill="#6ACDEE" stroke="#000" stroke-width="1"/>
<polygon points="344.5,194.0 349.5,191.5 351.0,191.5 355.0,195.5 355.0,198.5 351.0,202.5 349.5,202.5 344.5,200.0" fill="#99DDBB" stroke="#000" stroke-width="1"/>
<line x1="355" y1="197.5" x2="433" y2="197.5" stroke="#000" stroke-width="1" shape-rendering="crispEdges"/>
<polygon points="433.5,195.5 436.5,191.5 438.0,191.5 443.0,194.0 443.0,200.0 438.0,202.5 436.5,202.5 433.5,199.5" fill="#99DDBB" stroke="#000" stroke-width="1"/>
<text x="325" y="197.8" font-family="Liberation Mono" font-size="8.4" font-weight="normal" text-anchor="end" fill="#000" stroke="#000" stroke-width="0.2">Klemme_30A</text>
<text x="446" y="198.5" font-family="Liberation Mono" font-size="8.4" font-weight="normal" text-anchor="start" fill="#000" stroke="#000" stroke-width="0.2">Klemme_30A</text>
<polygon points="331.5,202.3 341.5,202.3 344.0,204.8 344.0,210.8 341.5,213.3 331.5,213.3" fill="#6ACDEE" stroke="#000" stroke-width="1"/>
<polygon points="344.5,204.8 349.5,202.3 351.0,202.3 355.0,206.3 355.0,209.3 351.0,213.3 349.5,213.3 344.5,210.8" fill="#99DDBB" stroke="#000" stroke-width="1"/>
<line x1="355" y1="207.5" x2="433" y2="207.5" stroke="#000" stroke-width="1" shape-rendering="crispEdges"/>
<polygon points="433.5,206.3 436.5,202.3 438.0,202.3 443.0,204.8 443.0,210.8 438.0,213.3 436.5,213.3 433.5,210.3" fill="#99DDBB" stroke="#000" stroke-width="1"/>
<text x="325" y="208.60000000000002" font-family="Liberation Mono" font-size="8.4" font-weight="normal" text-anchor="end" fill="#000" stroke="#000" stroke-width="0.2">Klemme_30B</text>
<text x="446" y="209.3" font-family="Liberation Mono" font-size="8.4" font-weight="normal" text-anchor="start" fill="#000" stroke="#000" stroke-width="0.2">Klemme_30B</text>
<polygon points="331.5,213.2 341.5,213.2 344.0,215.7 344.0,221.7 341.5,224.2 331.5,224.2" fill="#6ACDEE" stroke="#000" stroke-width="1"/>
<polygon points="344.5,215.7 349.5,213.2 351.0,213.2 355.0,217.2 355.0,220.2 351.0,224.2 349.5,224.2 344.5,221.7" fill="#99DDBB" stroke="#000" stroke-width="1"/>
<line x1="355" y1="218.5" x2="433" y2="218.5" stroke="#000" stroke-width="1" shape-rendering="crispEdges"/>
<polygon points="433.5,217.2 436.5,213.2 438.0,213.2 443.0,215.7 443.0,221.7 438.0,224.2 436.5,224.2 433.5,221.2" fill="#99DDBB" stroke="#000" stroke-width="1"/>
<text x="325" y="219.5" font-family="Liberation Mono" font-size="8.4" font-weight="normal" text-anchor="end" fill="#000" stroke="#000" stroke-width="0.2">Klemme_15</text>
<text x="446" y="220.2" font-family="Liberation Mono" font-size="8.4" font-weight="normal" text-anchor="start" fill="#000" stroke="#000" stroke-width="0.2">Klemme_15</text>
<text x="544" y="198.5" font-family="Liberation Mono" font-size="8.4" font-weight="normal" text-anchor="end" fill="#000" stroke="#000" stroke-width="0.2">Ground</text>
<polygon points="549,194.0 553,191.5 555,191.5 559.5,195.5 559.5,198.5 555,202.5 553,202.5 549,200.0" fill="#99DDBB" stroke="#000" stroke-width="1"/>
<line x1="559.5" y1="197.5" x2="663" y2="197.5" stroke="#000" stroke-width="1" shape-rendering="crispEdges"/>
<polygon points="673.5,194.0 668.5,191.5 667.0,191.5 663.0,195.5 663.0,198.5 667.0,202.5 668.5,202.5 673.5,200.0" fill="#99DDBB" stroke="#000" stroke-width="1"/>
<polygon points="686.0,191.5 676.0,191.5 673.5,194.0 673.5,200.0 676.0,202.5 686.0,202.5" fill="#6ACDEE" stroke="#000" stroke-width="1"/>
<text x="689.5" y="197.7" font-family="Liberation Mono" font-size="8.4" font-weight="normal" text-anchor="start" fill="#000" stroke="#000" stroke-width="0.2">Ground</text>
<text x="496" y="241" font-family="Liberation Mono" font-size="8.4" font-weight="normal" text-anchor="middle" fill="#000" stroke="#000" stroke-width="0.2">[not mapped]</text>
<rect x="438.0" y="276.5" width="136.5" height="127.5" fill="#99DDBB" stroke="#000" stroke-width="1" stroke-dasharray="3,2"/>
<text x="504.7" y="285.5" font-family="Liberation Mono" font-size="8.4" font-weight="normal" text-anchor="middle" fill="#000" stroke="#000" stroke-width="0.2">Hardware</text>
<polygon points="331.5,292.5 341.5,292.5 344.0,295.0 344.0,301.0 341.5,303.5 331.5,303.5" fill="#6ACDEE" stroke="#000" stroke-width="1"/>
<polygon points="344.5,295.0 349.5,292.5 351.0,292.5 355.0,296.5 355.0,299.5 351.0,303.5 349.5,303.5 344.5,301.0" fill="#99DDBB" stroke="#000" stroke-width="1"/>
<line x1="355" y1="298.5" x2="428.5" y2="298.5" stroke="#000" stroke-width="1" shape-rendering="crispEdges"/>
<polygon points="428.0,296.5 431.0,292.5 432.5,292.5 437.5,295.0 437.5,301.0 432.5,303.5 431.0,303.5 428.0,300.5" fill="#99DDBB" stroke="#000" stroke-width="1"/>
<rect x="433" y="297" width="3" height="3" fill="#000" stroke="none" stroke-width="1" shape-rendering="crispEdges"/>
<text x="325" y="298.8" font-family="Liberation Mono" font-size="8.4" font-weight="normal" text-anchor="end" fill="#000" stroke="#000" stroke-width="0.2">Digital_Input_1</text>
<text x="441.5" y="299.5" font-family="Liberation Mono" font-size="8.4" font-weight="normal" text-anchor="start" fill="#000" stroke="#000" stroke-width="0.2">Digital_Input_1</text>
<polygon points="331.5,303.2 341.5,303.2 344.0,305.7 344.0,311.7 341.5,314.2 331.5,314.2" fill="#6ACDEE" stroke="#000" stroke-width="1"/>
<polygon points="344.5,305.7 349.5,303.2 351.0,303.2 355.0,307.2 355.0,310.2 351.0,314.2 349.5,314.2 344.5,311.7" fill="#99DDBB" stroke="#000" stroke-width="1"/>
<line x1="355" y1="308.5" x2="428.5" y2="308.5" stroke="#000" stroke-width="1" shape-rendering="crispEdges"/>
<polygon points="428.0,307.2 431.0,303.2 432.5,303.2 437.5,305.7 437.5,311.7 432.5,314.2 431.0,314.2 428.0,311.2" fill="#99DDBB" stroke="#000" stroke-width="1"/>
<rect x="433" y="308" width="3" height="3" fill="#000" stroke="none" stroke-width="1" shape-rendering="crispEdges"/>
<text x="325" y="309.5" font-family="Liberation Mono" font-size="8.4" font-weight="normal" text-anchor="end" fill="#000" stroke="#000" stroke-width="0.2">Digital_Input_2</text>
<text x="441.5" y="310.2" font-family="Liberation Mono" font-size="8.4" font-weight="normal" text-anchor="start" fill="#000" stroke="#000" stroke-width="0.2">Digital_Input_2</text>
<polygon points="331.5,313.9 341.5,313.9 344.0,316.4 344.0,322.4 341.5,324.9 331.5,324.9" fill="#6ACDEE" stroke="#000" stroke-width="1"/>
<polygon points="344.5,316.4 349.5,313.9 351.0,313.9 355.0,317.9 355.0,320.9 351.0,324.9 349.5,324.9 344.5,322.4" fill="#99DDBB" stroke="#000" stroke-width="1"/>
<line x1="355" y1="319.5" x2="428.5" y2="319.5" stroke="#000" stroke-width="1" shape-rendering="crispEdges"/>
<polygon points="428.0,317.9 431.0,313.9 432.5,313.9 437.5,316.4 437.5,322.4 432.5,324.9 431.0,324.9 428.0,321.9" fill="#99DDBB" stroke="#000" stroke-width="1"/>
<rect x="433" y="318" width="3" height="3" fill="#000" stroke="none" stroke-width="1" shape-rendering="crispEdges"/>
<text x="325" y="320.2" font-family="Liberation Mono" font-size="8.4" font-weight="normal" text-anchor="end" fill="#000" stroke="#000" stroke-width="0.2">Digital_Input_3</text>
<text x="441.5" y="320.9" font-family="Liberation Mono" font-size="8.4" font-weight="normal" text-anchor="start" fill="#000" stroke="#000" stroke-width="0.2">Digital_Input_3</text>
<polygon points="331.5,324.6 341.5,324.6 344.0,327.1 344.0,333.1 341.5,335.6 331.5,335.6" fill="#6ACDEE" stroke="#000" stroke-width="1"/>
<polygon points="344.5,327.1 349.5,324.6 351.0,324.6 355.0,328.6 355.0,331.6 351.0,335.6 349.5,335.6 344.5,333.1" fill="#99DDBB" stroke="#000" stroke-width="1"/>
<line x1="355" y1="330.5" x2="428.5" y2="330.5" stroke="#000" stroke-width="1" shape-rendering="crispEdges"/>
<polygon points="428.0,328.6 431.0,324.6 432.5,324.6 437.5,327.1 437.5,333.1 432.5,335.6 431.0,335.6 428.0,332.6" fill="#99DDBB" stroke="#000" stroke-width="1"/>
<rect x="433" y="329" width="3" height="3" fill="#000" stroke="none" stroke-width="1" shape-rendering="crispEdges"/>
<text x="325" y="330.90000000000003" font-family="Liberation Mono" font-size="8.4" font-weight="normal" text-anchor="end" fill="#000" stroke="#000" stroke-width="0.2">Digital_Input_4</text>
<text x="441.5" y="331.6" font-family="Liberation Mono" font-size="8.4" font-weight="normal" text-anchor="start" fill="#000" stroke="#000" stroke-width="0.2">Digital_Input_4</text>
<polygon points="331.5,335.3 341.5,335.3 344.0,337.8 344.0,343.8 341.5,346.3 331.5,346.3" fill="#6ACDEE" stroke="#000" stroke-width="1"/>
<polygon points="344.5,337.8 349.5,335.3 351.0,335.3 355.0,339.3 355.0,342.3 351.0,346.3 349.5,346.3 344.5,343.8" fill="#99DDBB" stroke="#000" stroke-width="1"/>
<line x1="355" y1="340.5" x2="428.5" y2="340.5" stroke="#000" stroke-width="1" shape-rendering="crispEdges"/>
<polygon points="428.0,339.3 431.0,335.3 432.5,335.3 437.5,337.8 437.5,343.8 432.5,346.3 431.0,346.3 428.0,343.3" fill="#99DDBB" stroke="#000" stroke-width="1"/>
<rect x="433" y="340" width="3" height="3" fill="#000" stroke="none" stroke-width="1" shape-rendering="crispEdges"/>
<text x="325" y="341.6" font-family="Liberation Mono" font-size="8.4" font-weight="normal" text-anchor="end" fill="#000" stroke="#000" stroke-width="0.2">Analog_Input_1</text>
<text x="441.5" y="342.3" font-family="Liberation Mono" font-size="8.4" font-weight="normal" text-anchor="start" fill="#000" stroke="#000" stroke-width="0.2">Analog_Input_1</text>
<polygon points="331.5,346.0 341.5,346.0 344.0,348.5 344.0,354.5 341.5,357.0 331.5,357.0" fill="#6ACDEE" stroke="#000" stroke-width="1"/>
<polygon points="344.5,348.5 349.5,346.0 351.0,346.0 355.0,350.0 355.0,353.0 351.0,357.0 349.5,357.0 344.5,354.5" fill="#99DDBB" stroke="#000" stroke-width="1"/>
<line x1="355" y1="351.5" x2="428.5" y2="351.5" stroke="#000" stroke-width="1" shape-rendering="crispEdges"/>
<polygon points="428.0,350.0 431.0,346.0 432.5,346.0 437.5,348.5 437.5,354.5 432.5,357.0 431.0,357.0 428.0,354.0" fill="#99DDBB" stroke="#000" stroke-width="1"/>
<rect x="433" y="351" width="3" height="3" fill="#000" stroke="none" stroke-width="1" shape-rendering="crispEdges"/>
<text x="325" y="352.3" font-family="Liberation Mono" font-size="8.4" font-weight="normal" text-anchor="end" fill="#000" stroke="#000" stroke-width="0.2">Analog_Input_2</text>
<text x="441.5" y="353.0" font-family="Liberation Mono" font-size="8.4" font-weight="normal" text-anchor="start" fill="#000" stroke="#000" stroke-width="0.2">Analog_Input_2</text>
<polygon points="574.5,295.0 578.5,292.5 580.5,292.5 585.0,296.5 585.0,299.5 580.5,303.5 578.5,303.5 574.5,301.0" fill="#99DDBB" stroke="#000" stroke-width="1"/>
<rect x="576.5" y="296.5" width="2" height="3" fill="#000" stroke="none" stroke-width="1" shape-rendering="crispEdges"/>
<line x1="585" y1="298.5" x2="667.5" y2="298.5" stroke="#000" stroke-width="1" shape-rendering="crispEdges"/>
<polygon points="678.0,295.0 673.0,292.5 671.5,292.5 667.5,296.5 667.5,299.5 671.5,303.5 673.0,303.5 678.0,301.0" fill="#99DDBB" stroke="#000" stroke-width="1"/>
<polygon points="690.5,292.5 680.5,292.5 678,295.0 678,301.0 680.5,303.5 690.5,303.5" fill="#6ACDEE" stroke="#000" stroke-width="1"/>
<text x="569.5" y="299.5" font-family="Liberation Mono" font-size="8.4" font-weight="normal" text-anchor="end" fill="#000" stroke="#000" stroke-width="0.2">PWM_Out_1</text>
<text x="695" y="298.7" font-family="Liberation Mono" font-size="8.4" font-weight="normal" text-anchor="start" fill="#000" stroke="#000" stroke-width="0.2">PWM_Out_1</text>
<polygon points="574.5,305.7 578.5,303.2 580.5,303.2 585.0,307.2 585.0,310.2 580.5,314.2 578.5,314.2 574.5,311.7" fill="#99DDBB" stroke="#000" stroke-width="1"/>
<rect x="576.5" y="307.2" width="2" height="3" fill="#000" stroke="none" stroke-width="1" shape-rendering="crispEdges"/>
<line x1="585" y1="308.5" x2="667.5" y2="308.5" stroke="#000" stroke-width="1" shape-rendering="crispEdges"/>
<polygon points="678.0,305.7 673.0,303.2 671.5,303.2 667.5,307.2 667.5,310.2 671.5,314.2 673.0,314.2 678.0,311.7" fill="#99DDBB" stroke="#000" stroke-width="1"/>
<polygon points="690.5,303.2 680.5,303.2 678,305.7 678,311.7 680.5,314.2 690.5,314.2" fill="#6ACDEE" stroke="#000" stroke-width="1"/>
<text x="569.5" y="310.2" font-family="Liberation Mono" font-size="8.4" font-weight="normal" text-anchor="end" fill="#000" stroke="#000" stroke-width="0.2">PWM_Out_2</text>
<text x="695" y="309.4" font-family="Liberation Mono" font-size="8.4" font-weight="normal" text-anchor="start" fill="#000" stroke="#000" stroke-width="0.2">PWM_Out_2</text>
<polygon points="574.5,316.4 578.5,313.9 580.5,313.9 585.0,317.9 585.0,320.9 580.5,324.9 578.5,324.9 574.5,322.4" fill="#99DDBB" stroke="#000" stroke-width="1"/>
<rect x="576.5" y="317.9" width="2" height="3" fill="#000" stroke="none" stroke-width="1" shape-rendering="crispEdges"/>
<line x1="585" y1="319.5" x2="667.5" y2="319.5" stroke="#000" stroke-width="1" shape-rendering="crispEdges"/>
<polygon points="678.0,316.4 673.0,313.9 671.5,313.9 667.5,317.9 667.5,320.9 671.5,324.9 673.0,324.9 678.0,322.4" fill="#99DDBB" stroke="#000" stroke-width="1"/>
<polygon points="690.5,313.9 680.5,313.9 678,316.4 678,322.4 680.5,324.9 690.5,324.9" fill="#6ACDEE" stroke="#000" stroke-width="1"/>
<text x="569.5" y="320.9" font-family="Liberation Mono" font-size="8.4" font-weight="normal" text-anchor="end" fill="#000" stroke="#000" stroke-width="0.2">PWM_Out_3</text>
<text x="695" y="320.09999999999997" font-family="Liberation Mono" font-size="8.4" font-weight="normal" text-anchor="start" fill="#000" stroke="#000" stroke-width="0.2">PWM_Out_3</text>
<polygon points="574.5,327.1 578.5,324.6 580.5,324.6 585.0,328.6 585.0,331.6 580.5,335.6 578.5,335.6 574.5,333.1" fill="#99DDBB" stroke="#000" stroke-width="1"/>
<rect x="576.5" y="328.6" width="2" height="3" fill="#000" stroke="none" stroke-width="1" shape-rendering="crispEdges"/>
<line x1="585" y1="330.5" x2="667.5" y2="330.5" stroke="#000" stroke-width="1" shape-rendering="crispEdges"/>
<polygon points="678.0,327.1 673.0,324.6 671.5,324.6 667.5,328.6 667.5,331.6 671.5,335.6 673.0,335.6 678.0,333.1" fill="#99DDBB" stroke="#000" stroke-width="1"/>
<polygon points="690.5,324.6 680.5,324.6 678,327.1 678,333.1 680.5,335.6 690.5,335.6" fill="#6ACDEE" stroke="#000" stroke-width="1"/>
<text x="569.5" y="331.6" font-family="Liberation Mono" font-size="8.4" font-weight="normal" text-anchor="end" fill="#000" stroke="#000" stroke-width="0.2">PWM_Out_4</text>
<text x="695" y="330.8" font-family="Liberation Mono" font-size="8.4" font-weight="normal" text-anchor="start" fill="#000" stroke="#000" stroke-width="0.2">PWM_Out_4</text>
<polygon points="574.5,337.8 578.5,335.3 580.5,335.3 585.0,339.3 585.0,342.3 580.5,346.3 578.5,346.3 574.5,343.8" fill="#99DDBB" stroke="#000" stroke-width="1"/>
<rect x="576.5" y="339.3" width="2" height="3" fill="#000" stroke="none" stroke-width="1" shape-rendering="crispEdges"/>
<line x1="585" y1="340.5" x2="667.5" y2="340.5" stroke="#000" stroke-width="1" shape-rendering="crispEdges"/>
<polygon points="678.0,337.8 673.0,335.3 671.5,335.3 667.5,339.3 667.5,342.3 671.5,346.3 673.0,346.3 678.0,343.8" fill="#99DDBB" stroke="#000" stroke-width="1"/>
<polygon points="690.5,335.3 680.5,335.3 678,337.8 678,343.8 680.5,346.3 690.5,346.3" fill="#6ACDEE" stroke="#000" stroke-width="1"/>
<text x="569.5" y="342.3" font-family="Liberation Mono" font-size="8.4" font-weight="normal" text-anchor="end" fill="#000" stroke="#000" stroke-width="0.2">Dout_1</text>
<text x="695" y="341.5" font-family="Liberation Mono" font-size="8.4" font-weight="normal" text-anchor="start" fill="#000" stroke="#000" stroke-width="0.2">Dout_1</text>
<polygon points="574.5,348.5 578.5,346.0 580.5,346.0 585.0,350.0 585.0,353.0 580.5,357.0 578.5,357.0 574.5,354.5" fill="#99DDBB" stroke="#000" stroke-width="1"/>
<rect x="576.5" y="350.0" width="2" height="3" fill="#000" stroke="none" stroke-width="1" shape-rendering="crispEdges"/>
<line x1="585" y1="351.5" x2="667.5" y2="351.5" stroke="#000" stroke-width="1" shape-rendering="crispEdges"/>
<polygon points="678.0,348.5 673.0,346.0 671.5,346.0 667.5,350.0 667.5,353.0 671.5,357.0 673.0,357.0 678.0,354.5" fill="#99DDBB" stroke="#000" stroke-width="1"/>
<polygon points="690.5,346.0 680.5,346.0 678,348.5 678,354.5 680.5,357.0 690.5,357.0" fill="#6ACDEE" stroke="#000" stroke-width="1"/>
<text x="569.5" y="353.0" font-family="Liberation Mono" font-size="8.4" font-weight="normal" text-anchor="end" fill="#000" stroke="#000" stroke-width="0.2">Dout_2</text>
<text x="695" y="352.2" font-family="Liberation Mono" font-size="8.4" font-weight="normal" text-anchor="start" fill="#000" stroke="#000" stroke-width="0.2">Dout_2</text>
<polygon points="574.5,359.2 578.5,356.7 580.5,356.7 585.0,360.7 585.0,363.7 580.5,367.7 578.5,367.7 574.5,365.2" fill="#99DDBB" stroke="#000" stroke-width="1"/>
<rect x="576.5" y="360.7" width="2" height="3" fill="#000" stroke="none" stroke-width="1" shape-rendering="crispEdges"/>
<line x1="585" y1="362.5" x2="667.5" y2="362.5" stroke="#000" stroke-width="1" shape-rendering="crispEdges"/>
<polygon points="678.0,359.2 673.0,356.7 671.5,356.7 667.5,360.7 667.5,363.7 671.5,367.7 673.0,367.7 678.0,365.2" fill="#99DDBB" stroke="#000" stroke-width="1"/>
<polygon points="690.5,356.7 680.5,356.7 678,359.2 678,365.2 680.5,367.7 690.5,367.7" fill="#6ACDEE" stroke="#000" stroke-width="1"/>
<text x="569.5" y="363.7" font-family="Liberation Mono" font-size="8.4" font-weight="normal" text-anchor="end" fill="#000" stroke="#000" stroke-width="0.2">Dout_3</text>
<text x="695" y="362.9" font-family="Liberation Mono" font-size="8.4" font-weight="normal" text-anchor="start" fill="#000" stroke="#000" stroke-width="0.2">Dout_3</text>
<polygon points="574.5,369.9 578.5,367.4 580.5,367.4 585.0,371.4 585.0,374.4 580.5,378.4 578.5,378.4 574.5,375.9" fill="#99DDBB" stroke="#000" stroke-width="1"/>
<rect x="576.5" y="371.4" width="2" height="3" fill="#000" stroke="none" stroke-width="1" shape-rendering="crispEdges"/>
<line x1="585" y1="372.5" x2="667.5" y2="372.5" stroke="#000" stroke-width="1" shape-rendering="crispEdges"/>
<polygon points="678.0,369.9 673.0,367.4 671.5,367.4 667.5,371.4 667.5,374.4 671.5,378.4 673.0,378.4 678.0,375.9" fill="#99DDBB" stroke="#000" stroke-width="1"/>
<polygon points="690.5,367.4 680.5,367.4 678,369.9 678,375.9 680.5,378.4 690.5,378.4" fill="#6ACDEE" stroke="#000" stroke-width="1"/>
<text x="569.5" y="374.4" font-family="Liberation Mono" font-size="8.4" font-weight="normal" text-anchor="end" fill="#000" stroke="#000" stroke-width="0.2">Dout_4</text>
<text x="695" y="373.59999999999997" font-family="Liberation Mono" font-size="8.4" font-weight="normal" text-anchor="start" fill="#000" stroke="#000" stroke-width="0.2">Dout_4</text>
<polygon points="574.5,380.6 578.5,378.1 580.5,378.1 585.0,382.1 585.0,385.1 580.5,389.1 578.5,389.1 574.5,386.6" fill="#99DDBB" stroke="#000" stroke-width="1"/>
<rect x="576.5" y="382.1" width="2" height="3" fill="#000" stroke="none" stroke-width="1" shape-rendering="crispEdges"/>
<line x1="585" y1="383.5" x2="667.5" y2="383.5" stroke="#000" stroke-width="1" shape-rendering="crispEdges"/>
<polygon points="678.0,380.6 673.0,378.1 671.5,378.1 667.5,382.1 667.5,385.1 671.5,389.1 673.0,389.1 678.0,386.6" fill="#99DDBB" stroke="#000" stroke-width="1"/>
<polygon points="690.5,378.1 680.5,378.1 678,380.6 678,386.6 680.5,389.1 690.5,389.1" fill="#6ACDEE" stroke="#000" stroke-width="1"/>
<text x="569.5" y="385.1" font-family="Liberation Mono" font-size="8.4" font-weight="normal" text-anchor="end" fill="#000" stroke="#000" stroke-width="0.2">AOut_1</text>
<text x="695" y="384.3" font-family="Liberation Mono" font-size="8.4" font-weight="normal" text-anchor="start" fill="#000" stroke="#000" stroke-width="0.2">AOut_1</text>
<polygon points="574.5,391.3 578.5,388.8 580.5,388.8 585.0,392.8 585.0,395.8 580.5,399.8 578.5,399.8 574.5,397.3" fill="#99DDBB" stroke="#000" stroke-width="1"/>
<rect x="576.5" y="392.8" width="2" height="3" fill="#000" stroke="none" stroke-width="1" shape-rendering="crispEdges"/>
<line x1="585" y1="394.5" x2="667.5" y2="394.5" stroke="#000" stroke-width="1" shape-rendering="crispEdges"/>
<polygon points="678.0,391.3 673.0,388.8 671.5,388.8 667.5,392.8 667.5,395.8 671.5,399.8 673.0,399.8 678.0,397.3" fill="#99DDBB" stroke="#000" stroke-width="1"/>
<polygon points="690.5,388.8 680.5,388.8 678,391.3 678,397.3 680.5,399.8 690.5,399.8" fill="#6ACDEE" stroke="#000" stroke-width="1"/>
<text x="569.5" y="395.8" font-family="Liberation Mono" font-size="8.4" font-weight="normal" text-anchor="end" fill="#000" stroke="#000" stroke-width="0.2">AOut_2</text>
<text x="695" y="395.0" font-family="Liberation Mono" font-size="8.4" font-weight="normal" text-anchor="start" fill="#000" stroke="#000" stroke-width="0.2">AOut_2</text>
<text x="506" y="415" font-family="Liberation Mono" font-size="8.4" font-weight="normal" text-anchor="middle" fill="#000" stroke="#000" stroke-width="0.2">[ECU]</text>
<rect x="469.5" y="464.0" width="106" height="52.0" fill="#99DDBB" stroke="#000" stroke-width="1" stroke-dasharray="3,2"/>
<text x="521" y="471.7" font-family="Liberation Mono" font-size="8.4" font-weight="normal" text-anchor="middle" fill="#000" stroke="#000" stroke-width="0.2">Communication</text>
<polygon points="575.5,480.5 579.5,478.0 581.5,478.0 586.0,482.0 586.0,485.0 581.5,489.0 579.5,489.0 575.5,486.5" fill="#99DDBB" stroke="#000" stroke-width="1"/>
<rect x="577.5" y="482.0" width="2" height="3" fill="#000" stroke="none" stroke-width="1" shape-rendering="crispEdges"/>
<line x1="586" y1="483.5" x2="668" y2="483.5" stroke="#000" stroke-width="1" shape-rendering="crispEdges"/>
<polygon points="678.5,480.5 673.5,478.0 672.0,478.0 668.0,482.0 668.0,485.0 672.0,489.0 673.5,489.0 678.5,486.5" fill="#99DDBB" stroke="#000" stroke-width="1"/>
<polygon points="691.0,478.0 681.0,478.0 678.5,480.5 678.5,486.5 681.0,489.0 691.0,489.0" fill="#6ACDEE" stroke="#000" stroke-width="1"/>
<text x="570" y="485.0" font-family="Liberation Mono" font-size="8.4" font-weight="normal" text-anchor="end" fill="#000" stroke="#000" stroke-width="0.2">A_CAN</text>
<text x="695" y="484.2" font-family="Liberation Mono" font-size="8.4" font-weight="normal" text-anchor="start" fill="#000" stroke="#000" stroke-width="0.2">A_CAN</text>
<polygon points="575.5,491.2 579.5,488.7 581.5,488.7 586.0,492.7 586.0,495.7 581.5,499.7 579.5,499.7 575.5,497.2" fill="#99DDBB" stroke="#000" stroke-width="1"/>
<rect x="577.5" y="492.7" width="2" height="3" fill="#000" stroke="none" stroke-width="1" shape-rendering="crispEdges"/>
<line x1="586" y1="494.5" x2="668" y2="494.5" stroke="#000" stroke-width="1" shape-rendering="crispEdges"/>
<polygon points="678.5,491.2 673.5,488.7 672.0,488.7 668.0,492.7 668.0,495.7 672.0,499.7 673.5,499.7 678.5,497.2" fill="#99DDBB" stroke="#000" stroke-width="1"/>
<polygon points="691.0,488.7 681.0,488.7 678.5,491.2 678.5,497.2 681.0,499.7 691.0,499.7" fill="#6ACDEE" stroke="#000" stroke-width="1"/>
<text x="570" y="495.7" font-family="Liberation Mono" font-size="8.4" font-weight="normal" text-anchor="end" fill="#000" stroke="#000" stroke-width="0.2">FA_CAN</text>
<text x="695" y="494.9" font-family="Liberation Mono" font-size="8.4" font-weight="normal" text-anchor="start" fill="#000" stroke="#000" stroke-width="0.2">FA_CAN</text>
<polygon points="575.5,501.9 579.5,499.4 581.5,499.4 586.0,503.4 586.0,506.4 581.5,510.4 579.5,510.4 575.5,507.9" fill="#99DDBB" stroke="#000" stroke-width="1"/>
<rect x="577.5" y="503.4" width="2" height="3" fill="#000" stroke="none" stroke-width="1" shape-rendering="crispEdges"/>
<line x1="586" y1="504.5" x2="668" y2="504.5" stroke="#000" stroke-width="1" shape-rendering="crispEdges"/>
<polygon points="678.5,501.9 673.5,499.4 672.0,499.4 668.0,503.4 668.0,506.4 672.0,510.4 673.5,510.4 678.5,507.9" fill="#99DDBB" stroke="#000" stroke-width="1"/>
<polygon points="691.0,499.4 681.0,499.4 678.5,501.9 678.5,507.9 681.0,510.4 691.0,510.4" fill="#6ACDEE" stroke="#000" stroke-width="1"/>
<text x="570" y="506.4" font-family="Liberation Mono" font-size="8.4" font-weight="normal" text-anchor="end" fill="#000" stroke="#000" stroke-width="0.2">Flexray_A</text>
<text x="695" y="505.59999999999997" font-family="Liberation Mono" font-size="8.4" font-weight="normal" text-anchor="start" fill="#000" stroke="#000" stroke-width="0.2">Flexray_A</text>
<rect x="508" y="524" width="2" height="2" fill="#000" stroke="none" stroke-width="1" />
<text x="525" y="528" font-family="Liberation Mono" font-size="8.4" font-weight="normal" text-anchor="middle" fill="#000" stroke="#000" stroke-width="0.2">[ECU]</text>
<rect x="469.5" y="564.5" width="106" height="28" fill="#6DD3EF" stroke="#000" stroke-width="1"/>
<text x="521" y="572.7" font-family="Liberation Mono" font-size="8.4" font-weight="normal" text-anchor="middle" fill="#000" stroke="#000" stroke-width="0.2">Functions</text>
<text x="522" y="603" font-family="Liberation Mono" font-size="8.4" font-weight="normal" text-anchor="middle" fill="#000" stroke="#000" stroke-width="0.2">[ECU]</text>
</g>
<rect x="269" y="759" width="431" height="18" fill="url(#sbH)" stroke="none" stroke-width="1" />
<rect x="271" y="761.5" width="14.5" height="15.0" rx="2" fill="#B8C4D8" shape-rendering="geometricPrecision"/>
<rect x="270.5" y="761.0" width="14" height="14.5" rx="2" fill="url(#btn)" stroke="#F4F8FF" stroke-width="1" shape-rendering="geometricPrecision"/>
<path d="M279.5,764.75 L276.0,768.25 L279.5,771.75" fill="none" stroke="#4D6185" stroke-width="2" shape-rendering="geometricPrecision"/>
<rect x="288.5" y="760.5" width="6" height="15" rx="2" fill="url(#btn)" stroke="#F4F8FF" stroke-width="1"/>
<rect x="684" y="761.5" width="14.5" height="15.0" rx="2" fill="#B8C4D8" shape-rendering="geometricPrecision"/>
<rect x="683.5" y="761.0" width="14" height="14.5" rx="2" fill="url(#btn)" stroke="#F4F8FF" stroke-width="1" shape-rendering="geometricPrecision"/>
<path d="M688.5,764.75 L692.0,768.25 L688.5,771.75" fill="none" stroke="#4D6185" stroke-width="2" shape-rendering="geometricPrecision"/>
<rect x="701" y="8" width="867" height="774" fill="#0A4EDE" stroke="none" stroke-width="1" />
<rect x="701" y="8" width="867" height="1" fill="#3A5E9A" stroke="none" stroke-width="1" />
<rect x="701" y="9" width="867" height="28" fill="url(#tAct)" stroke="none" stroke-width="1" />
<rect x="701" y="8" width="1" height="774" fill="#0838B0" stroke="none" stroke-width="1" />
<rect x="705" y="37" width="1" height="740" fill="#3C7CE8" stroke="none" stroke-width="1" />
<rect x="706" y="37" width="1" height="740" fill="#000" stroke="none" stroke-width="1" />
<rect x="707" y="37" width="6" height="740" fill="#ECE9D8" stroke="none" stroke-width="1" />
<rect x="707" y="37" width="856" height="1" fill="#C8D4F0" stroke="none" stroke-width="1" />
<rect x="713" y="38" width="1" height="739" fill="#000" stroke="none" stroke-width="1" />
<rect x="713" y="38" width="850" height="1" fill="#000" stroke="none" stroke-width="1" />
<rect x="707" y="20" width="14" height="7" fill="#18C018" stroke="none" stroke-width="1" />
<rect x="708" y="21" width="4" height="2" fill="#60F060" stroke="none" stroke-width="1" />
<rect x="714" y="21" width="3" height="3" fill="#008800" stroke="none" stroke-width="1" />
<rect x="717" y="22" width="2" height="2" fill="#000" stroke="none" stroke-width="1" />
<rect x="721" y="20" width="1" height="7" fill="#000" stroke="none" stroke-width="1" />
<rect x="712" y="26" width="3" height="1" fill="#000" stroke="none" stroke-width="1" />
<text x="729.5" y="29.5" font-family="Liberation Sans" font-size="13" font-weight="bold" text-anchor="start" fill="#0A1E60" >ECU_Structure - Hardware Structure Builder</text>
<text x="728.5" y="28.5" font-family="Liberation Sans" font-size="13" font-weight="bold" text-anchor="start" fill="#FFFFFF" >ECU_Structure - Hardware Structure Builder</text>
<rect x="1496.5" y="13.5" width="21" height="21" rx="3" fill="url(#minB)" stroke="#FFFFFF" stroke-width="1" shape-rendering="geometricPrecision"/>
<rect x="1519.5" y="13.5" width="21" height="21" rx="3" fill="url(#minB)" stroke="#FFFFFF" stroke-width="1" shape-rendering="geometricPrecision"/>
<rect x="1542.5" y="13.5" width="21" height="21" rx="3" fill="url(#clsB)" stroke="#FFFFFF" stroke-width="1" shape-rendering="geometricPrecision"/>
<rect x="1501" y="26" width="8" height="3" fill="#FFFFFF" stroke="none" stroke-width="1" />
<rect x="1524.5" y="18.5" width="11" height="10" fill="none" stroke="#FFFFFF" stroke-width="1"/>
<rect x="1524" y="18" width="12" height="3" fill="#FFFFFF" stroke="none" stroke-width="1" />
<path d="M1547.5,18.5 L1558.5,29.5 M1558.5,18.5 L1547.5,29.5" stroke="#FFFFFF" stroke-width="2" shape-rendering="geometricPrecision"/>
<rect x="714" y="39" width="833" height="720" fill="#FFFFFF" stroke="none" stroke-width="1" />
<g clip-path="url(#clipHD)">
<polyline points="827.5,163.5 827.5,262.5 787.5,262.5" fill="none" stroke="#80DE60" stroke-width="1" shape-rendering="crispEdges"/>
<polyline points="862.5,163.5 862.5,228.5 892.5,228.5" fill="none" stroke="#80DE60" stroke-width="1" shape-rendering="crispEdges"/>
<polyline points="787.5,272.5 831.5,272.5 831.5,382.5" fill="none" stroke="#80DE60" stroke-width="1" shape-rendering="crispEdges"/>
<polyline points="787.5,371.5 831.5,371.5" fill="none" stroke="#80DE60" stroke-width="1" shape-rendering="crispEdges"/>
<polyline points="787.5,382.5 831.5,382.5 831.5,497.5" fill="none" stroke="#80DE60" stroke-width="1" shape-rendering="crispEdges"/>
<polyline points="787.5,497.5 831.5,497.5" fill="none" stroke="#80DE60" stroke-width="1" shape-rendering="crispEdges"/>
<polyline points="787.5,507.5 827.5,507.5 827.5,601.5" fill="none" stroke="#80DE60" stroke-width="1" shape-rendering="crispEdges"/>
<polyline points="892.5,236.5 848.5,236.5 848.5,304.5 892.5,304.5" fill="none" stroke="#80DE60" stroke-width="1" shape-rendering="crispEdges"/>
<polyline points="892.5,314.5 848.5,314.5 848.5,371.5 892.5,371.5" fill="none" stroke="#80DE60" stroke-width="1" shape-rendering="crispEdges"/>
<polyline points="892.5,382.5 848.5,382.5 848.5,434.5 896.5,434.5" fill="none" stroke="#80DE60" stroke-width="1" shape-rendering="crispEdges"/>
<polyline points="896.5,445.5 852.5,445.5 852.5,497.5 896.5,497.5" fill="none" stroke="#80DE60" stroke-width="1" shape-rendering="crispEdges"/>
<polyline points="896.5,507.5 862.5,507.5 862.5,601.5" fill="none" stroke="#80DE60" stroke-width="1" shape-rendering="crispEdges"/>
<polyline points="876.5,110.5 876.5,67.5 1201.5,67.5 1201.5,727.5" fill="none" stroke="#DD3ADD" stroke-width="1" shape-rendering="crispEdges"/>
<polyline points="876.5,78.5 1275.5,78.5" fill="none" stroke="#DD3ADD" stroke-width="1" shape-rendering="crispEdges"/>
<polyline points="1158.5,163.5 1215.5,163.5 1215.5,144.5 1273.5,144.5" fill="none" stroke="#DD3ADD" stroke-width="1" shape-rendering="crispEdges"/>
<polyline points="1158.5,225.5 1201.5,225.5" fill="none" stroke="#DD3ADD" stroke-width="1" shape-rendering="crispEdges"/>
<polyline points="1158.5,287.5 1201.5,287.5" fill="none" stroke="#DD3ADD" stroke-width="1" shape-rendering="crispEdges"/>
<polyline points="1158.5,350.5 1201.5,350.5" fill="none" stroke="#DD3ADD" stroke-width="1" shape-rendering="crispEdges"/>
<polyline points="1158.5,413.5 1201.5,413.5" fill="none" stroke="#DD3ADD" stroke-width="1" shape-rendering="crispEdges"/>
<polyline points="1158.5,475.5 1201.5,475.5" fill="none" stroke="#DD3ADD" stroke-width="1" shape-rendering="crispEdges"/>
<polyline points="1158.5,533.5 1218.5,533.5 1218.5,565.5 1279.5,565.5" fill="none" stroke="#DD3ADD" stroke-width="1" shape-rendering="crispEdges"/>
<polyline points="1158.5,596.5 1201.5,596.5" fill="none" stroke="#DD3ADD" stroke-width="1" shape-rendering="crispEdges"/>
<polyline points="1158.5,664.5 1201.5,664.5" fill="none" stroke="#DD3ADD" stroke-width="1" shape-rendering="crispEdges"/>
<polyline points="1158.5,727.5 1201.5,727.5" fill="none" stroke="#DD3ADD" stroke-width="1" shape-rendering="crispEdges"/>
<polyline points="855.5,110.5 855.5,70.5 1275.5,70.5" fill="none" stroke="#DCDC50" stroke-width="1" shape-rendering="crispEdges"/>
<polyline points="954.5,70.5 954.5,210.5" fill="none" stroke="#DCDC50" stroke-width="1" shape-rendering="crispEdges"/>
<polyline points="1229.5,70.5 1229.5,502.5" fill="none" stroke="#DCDC50" stroke-width="1" shape-rendering="crispEdges"/>
<polyline points="1229.5,136.5 1273.5,136.5" fill="none" stroke="#DCDC50" stroke-width="1" shape-rendering="crispEdges"/>
<polyline points="1229.5,199.5 1273.5,199.5" fill="none" stroke="#DCDC50" stroke-width="1" shape-rendering="crispEdges"/>
<polyline points="1229.5,262.5 1273.5,262.5" fill="none" stroke="#DCDC50" stroke-width="1" shape-rendering="crispEdges"/>
<polyline points="1229.5,319.5 1273.5,319.5" fill="none" stroke="#DCDC50" stroke-width="1" shape-rendering="crispEdges"/>
<polyline points="1229.5,351.5 1477.5,351.5" fill="none" stroke="#DCDC50" stroke-width="1" shape-rendering="crispEdges"/>
<polyline points="1229.5,381.5 1273.5,381.5" fill="none" stroke="#DCDC50" stroke-width="1" shape-rendering="crispEdges"/>
<polyline points="1229.5,444.5 1273.5,444.5" fill="none" stroke="#DCDC50" stroke-width="1" shape-rendering="crispEdges"/>
<polyline points="1229.5,502.5 1273.5,502.5" fill="none" stroke="#DCDC50" stroke-width="1" shape-rendering="crispEdges"/>
<polyline points="1400.5,70.5 1443.5,70.5 1443.5,319.5" fill="none" stroke="#2EA82E" stroke-width="1" shape-rendering="crispEdges"/>
<polyline points="1443.5,126.5 1487.5,126.5" fill="none" stroke="#2EA82E" stroke-width="1" shape-rendering="crispEdges"/>
<polyline points="1399.5,199.5 1443.5,199.5" fill="none" stroke="#2EA82E" stroke-width="1" shape-rendering="crispEdges"/>
<polyline points="1399.5,262.5 1443.5,262.5" fill="none" stroke="#2EA82E" stroke-width="1" shape-rendering="crispEdges"/>
<polyline points="1399.5,319.5 1443.5,319.5" fill="none" stroke="#2EA82E" stroke-width="1" shape-rendering="crispEdges"/>
<polyline points="1403.5,570.5 1461.5,570.5" fill="none" stroke="#A87858" stroke-width="1" shape-rendering="crispEdges"/>
<polyline points="1417.5,570.5 1417.5,690.5 1461.5,690.5" fill="none" stroke="#A87858" stroke-width="1" shape-rendering="crispEdges"/>
<polyline points="1417.5,633.5 1461.5,633.5" fill="none" stroke="#A87858" stroke-width="1" shape-rendering="crispEdges"/>
<rect x="793.25" y="122.05" width="103.7" height="29.7" fill="#C0C0C0" stroke="#000" stroke-width="1.35" shape-rendering="geometricPrecision"/>
<text x="845.1" y="139.9" font-family="Liberation Mono" font-size="8.4" font-weight="normal" text-anchor="middle" fill="#000" stroke="#000" stroke-width="0.2">ZGW</text>
<rect x="809.15" y="111.05" width="9.7" height="9.5" fill="#C0C0C0" stroke="#9A5CC8" stroke-width="1.3" shape-rendering="geometricPrecision"/>
<rect x="829.85" y="111.05" width="9.7" height="9.5" fill="#C0C0C0" stroke="#C8946A" stroke-width="1.3" shape-rendering="geometricPrecision"/>
<rect x="850.85" y="111.05" width="9.7" height="9.5" fill="#C0C0C0" stroke="#C8C840" stroke-width="1.3" shape-rendering="geometricPrecision"/>
<rect x="871.75" y="111.05" width="9.7" height="9.5" fill="#C0C0C0" stroke="#DD44DD" stroke-width="1.3" shape-rendering="geometricPrecision"/>
<rect x="783.05" y="127.15" width="8.9" height="9.3" fill="#C0C0C0" stroke="#2020C0" stroke-width="1.3" shape-rendering="geometricPrecision"/>
<rect x="783.05" y="137.85" width="8.9" height="9.3" fill="#C0C0C0" stroke="#40B0F0" stroke-width="1.3" shape-rendering="geometricPrecision"/>
<rect x="822.95" y="153.25" width="9.3" height="9.7" fill="#C0C0C0" stroke="#80DE60" stroke-width="1.3" shape-rendering="geometricPrecision"/>
<rect x="857.95" y="153.25" width="9.3" height="9.7" fill="#C0C0C0" stroke="#80DE60" stroke-width="1.3" shape-rendering="geometricPrecision"/>
<rect x="903.25" y="221.05" width="103.7" height="29.7" fill="#C0C0C0" stroke="#000" stroke-width="1.35" shape-rendering="geometricPrecision"/>
<text x="955.1" y="238.9" font-family="Liberation Mono" font-size="8.4" font-weight="normal" text-anchor="middle" fill="#000" stroke="#000" stroke-width="0.2">Kombi</text>
<rect x="950.25" y="211.05" width="9.5" height="9.0" fill="#C0C0C0" stroke="#C8C840" stroke-width="1.3" shape-rendering="geometricPrecision"/>
<rect x="892.95" y="224.05" width="9.0" height="9.5" fill="#C0C0C0" stroke="#80DE60" stroke-width="1.3" shape-rendering="geometricPrecision"/>
<rect x="892.95" y="231.55" width="9.0" height="6.5" fill="#C0C0C0" stroke="#80DE60" stroke-width="1.3" shape-rendering="geometricPrecision"/>
<rect x="892.95" y="239.05" width="9.0" height="9.5" fill="#C0C0C0" stroke="#E8A040" stroke-width="1.3" shape-rendering="geometricPrecision"/>
<rect x="673.05" y="252.35" width="103.7" height="29.7" fill="#C0C0C0" stroke="#000" stroke-width="1.35" shape-rendering="geometricPrecision"/>
<text x="724.6" y="270.2" font-family="Liberation Mono" font-size="8.4" font-weight="normal" text-anchor="middle" fill="#000" stroke="#000" stroke-width="0.2">MDD</text>
<rect x="778.25" y="257.75" width="9.0" height="9.3" fill="#C0C0C0" stroke="#80DE60" stroke-width="1.3" shape-rendering="geometricPrecision"/>
<rect x="778.25" y="268.45" width="9.0" height="9.3" fill="#C0C0C0" stroke="#80DE60" stroke-width="1.3" shape-rendering="geometricPrecision"/>
<rect x="903.25" y="294.25" width="103.7" height="30.3" fill="#C0C0C0" stroke="#000" stroke-width="1.35" shape-rendering="geometricPrecision"/>
<text x="955.1" y="312.4" font-family="Liberation Mono" font-size="8.4" font-weight="normal" text-anchor="middle" fill="#000" stroke="#000" stroke-width="0.2">CDC</text>
<rect x="892.95" y="299.25" width="9.0" height="9.3" fill="#C0C0C0" stroke="#80DE60" stroke-width="1.3" shape-rendering="geometricPrecision"/>
<rect x="892.95" y="310.05" width="9.0" height="9.0" fill="#C0C0C0" stroke="#80DE60" stroke-width="1.3" shape-rendering="geometricPrecision"/>
<rect x="673.05" y="362.35" width="103.7" height="29.1" fill="#C0C0C0" stroke="#000" stroke-width="1.35" shape-rendering="geometricPrecision"/>
<text x="724.2" y="379.90000000000003" font-family="Liberation Mono" font-size="8.4" font-weight="normal" text-anchor="middle" fill="#000" stroke="#000" stroke-width="0.2">Amp Top</text>
<rect x="778.25" y="367.35" width="9.0" height="9.1" fill="#C0C0C0" stroke="#80DE60" stroke-width="1.3" shape-rendering="geometricPrecision"/>
<rect x="778.25" y="377.75" width="9.0" height="9.1" fill="#C0C0C0" stroke="#80DE60" stroke-width="1.3" shape-rendering="geometricPrecision"/>
<rect x="903.25" y="362.35" width="103.7" height="29.1" fill="#C0C0C0" stroke="#000" stroke-width="1.35" shape-rendering="geometricPrecision"/>
<text x="955.1" y="379.90000000000003" font-family="Liberation Mono" font-size="8.4" font-weight="normal" text-anchor="middle" fill="#000" stroke="#000" stroke-width="0.2">MMC</text>
<rect x="892.95" y="367.35" width="9.0" height="9.1" fill="#C0C0C0" stroke="#80DE60" stroke-width="1.3" shape-rendering="geometricPrecision"/>
<rect x="892.95" y="377.75" width="9.0" height="9.1" fill="#C0C0C0" stroke="#80DE60" stroke-width="1.3" shape-rendering="geometricPrecision"/>
<rect x="907.05" y="424.95" width="103.7" height="30.1" fill="#C0C0C0" stroke="#000" stroke-width="1.35" shape-rendering="geometricPrecision"/>
<text x="958.9" y="443.0" font-family="Liberation Mono" font-size="8.4" font-weight="normal" text-anchor="middle" fill="#000" stroke="#000" stroke-width="0.2">TVM</text>
<rect x="896.75" y="429.95" width="9.0" height="9.3" fill="#C0C0C0" stroke="#80DE60" stroke-width="1.3" shape-rendering="geometricPrecision"/>
<rect x="896.75" y="440.55" width="9.0" height="9.3" fill="#C0C0C0" stroke="#80DE60" stroke-width="1.3" shape-rendering="geometricPrecision"/>
<rect x="907.05" y="487.15" width="103.7" height="30.799999999999997" fill="#C0C0C0" stroke="#000" stroke-width="1.35" shape-rendering="geometricPrecision"/>
<text x="958.9" y="505.54999999999995" font-family="Liberation Mono" font-size="8.4" font-weight="normal" text-anchor="middle" fill="#000" stroke="#000" stroke-width="0.2">SDARS</text>
<rect x="896.75" y="492.75" width="9.0" height="9.3" fill="#C0C0C0" stroke="#80DE60" stroke-width="1.3" shape-rendering="geometricPrecision"/>
<rect x="896.75" y="503.55" width="9.0" height="9.3" fill="#C0C0C0" stroke="#80DE60" stroke-width="1.3" shape-rendering="geometricPrecision"/>
<rect x="673.05" y="487.15" width="103.7" height="30.799999999999997" fill="#C0C0C0" stroke="#000" stroke-width="1.35" shape-rendering="geometricPrecision"/>
<text x="724.6" y="505.54999999999995" font-family="Liberation Mono" font-size="8.4" font-weight="normal" text-anchor="middle" fill="#000" stroke="#000" stroke-width="0.2">RSE</text>
<rect x="778.25" y="492.75" width="9.0" height="9.3" fill="#C0C0C0" stroke="#80DE60" stroke-width="1.3" shape-rendering="geometricPrecision"/>
<rect x="778.25" y="503.55" width="9.0" height="9.3" fill="#C0C0C0" stroke="#80DE60" stroke-width="1.3" shape-rendering="geometricPrecision"/>
<rect x="793.15" y="613.25" width="103.7" height="29.2" fill="#C0C0C0" stroke="#000" stroke-width="1.35" shape-rendering="geometricPrecision"/>
<text x="845.0" y="630.85" font-family="Liberation Mono" font-size="8.4" font-weight="normal" text-anchor="middle" fill="#000" stroke="#000" stroke-width="0.2">EntertainServ</text>
<rect x="823.35" y="601.95" width="8.7" height="9.8" fill="#C0C0C0" stroke="#80DE60" stroke-width="1.3" shape-rendering="geometricPrecision"/>
<rect x="857.85" y="601.95" width="9.1" height="9.8" fill="#C0C0C0" stroke="#80DE60" stroke-width="1.3" shape-rendering="geometricPrecision"/>
<rect x="799.05" y="706.85" width="102.8" height="29.7" fill="#C0C0C0" stroke="#000" stroke-width="1.35" shape-rendering="geometricPrecision"/>
<text x="850.4499999999999" y="724.7" font-family="Liberation Mono" font-size="8.4" font-weight="normal" text-anchor="middle" fill="#000" stroke="#000" stroke-width="0.2">ECU</text>
<rect x="788.05" y="709.15" width="9.5" height="8.5" fill="#C0C0C0" stroke="#907050" stroke-width="1.3" shape-rendering="geometricPrecision"/>
<rect x="788.05" y="716.25" width="9.5" height="7.5" fill="#C0C0C0" stroke="#D8D860" stroke-width="1.3" shape-rendering="geometricPrecision"/>
<rect x="788.05" y="724.75" width="9.5" height="9.3" fill="#C0C0C0" stroke="#DD44DD" stroke-width="1.3" shape-rendering="geometricPrecision"/>
<rect x="1044.05" y="148.05" width="103.7" height="29.7" fill="#C0C0C0" stroke="#000" stroke-width="1.35" shape-rendering="geometricPrecision"/>
<text x="1095.8999999999999" y="165.9" font-family="Liberation Mono" font-size="8.4" font-weight="normal" text-anchor="middle" fill="#000" stroke="#000" stroke-width="0.2">DSC</text>
<rect x="1149.45" y="158.35000000000002" width="8.7" height="9.1" fill="#C0C0C0" stroke="#DD3ADD" stroke-width="1.3" shape-rendering="geometricPrecision"/>
<rect x="1044.05" y="210.85" width="103.7" height="29.7" fill="#C0C0C0" stroke="#000" stroke-width="1.35" shape-rendering="geometricPrecision"/>
<text x="1095.8999999999999" y="228.7" font-family="Liberation Mono" font-size="8.4" font-weight="normal" text-anchor="middle" fill="#000" stroke="#000" stroke-width="0.2">EPS</text>
<rect x="1149.45" y="221.15" width="8.7" height="9.1" fill="#C0C0C0" stroke="#DD3ADD" stroke-width="1.3" shape-rendering="geometricPrecision"/>
<rect x="1044.05" y="273.05" width="103.7" height="29.7" fill="#C0C0C0" stroke="#000" stroke-width="1.35" shape-rendering="geometricPrecision"/>
<text x="1095.8999999999999" y="290.90000000000003" font-family="Liberation Mono" font-size="8.4" font-weight="normal" text-anchor="middle" fill="#000" stroke="#000" stroke-width="0.2">HC-2</text>
<rect x="1149.45" y="283.35" width="8.7" height="9.1" fill="#C0C0C0" stroke="#DD3ADD" stroke-width="1.3" shape-rendering="geometricPrecision"/>
<rect x="1044.05" y="335.85" width="103.7" height="29.7" fill="#C0C0C0" stroke="#000" stroke-width="1.35" shape-rendering="geometricPrecision"/>
<text x="1095.8999999999999" y="353.70000000000005" font-family="Liberation Mono" font-size="8.4" font-weight="normal" text-anchor="middle" fill="#000" stroke="#000" stroke-width="0.2">ICM-V</text>
<rect x="1149.45" y="346.15000000000003" width="8.7" height="9.1" fill="#C0C0C0" stroke="#DD3ADD" stroke-width="1.3" shape-rendering="geometricPrecision"/>
<rect x="1044.05" y="399.05" width="103.7" height="29.7" fill="#C0C0C0" stroke="#000" stroke-width="1.35" shape-rendering="geometricPrecision"/>
<text x="1095.8999999999999" y="416.90000000000003" font-family="Liberation Mono" font-size="8.4" font-weight="normal" text-anchor="middle" fill="#000" stroke="#000" stroke-width="0.2">RK-VR</text>
<rect x="1149.45" y="409.35" width="8.7" height="9.1" fill="#C0C0C0" stroke="#DD3ADD" stroke-width="1.3" shape-rendering="geometricPrecision"/>
<rect x="1044.05" y="460.85" width="103.7" height="29.7" fill="#C0C0C0" stroke="#000" stroke-width="1.35" shape-rendering="geometricPrecision"/>
<text x="1095.8999999999999" y="478.70000000000005" font-family="Liberation Mono" font-size="8.4" font-weight="normal" text-anchor="middle" fill="#000" stroke="#000" stroke-width="0.2">RK-VL</text>
<rect x="1149.45" y="471.15000000000003" width="8.7" height="9.1" fill="#C0C0C0" stroke="#DD3ADD" stroke-width="1.3" shape-rendering="geometricPrecision"/>
<rect x="1044.05" y="518.75" width="103.7" height="29.7" fill="#C0C0C0" stroke="#000" stroke-width="1.35" shape-rendering="geometricPrecision"/>
<text x="1095.8999999999999" y="536.6" font-family="Liberation Mono" font-size="8.4" font-weight="normal" text-anchor="middle" fill="#000" stroke="#000" stroke-width="0.2">RK-HL</text>
<rect x="1149.45" y="529.05" width="8.7" height="9.1" fill="#C0C0C0" stroke="#DD3ADD" stroke-width="1.3" shape-rendering="geometricPrecision"/>
<rect x="1044.05" y="581.25" width="103.7" height="29.7" fill="#C0C0C0" stroke="#000" stroke-width="1.35" shape-rendering="geometricPrecision"/>
<text x="1095.8999999999999" y="599.1" font-family="Liberation Mono" font-size="8.4" font-weight="normal" text-anchor="middle" fill="#000" stroke="#000" stroke-width="0.2">RK-HR</text>
<rect x="1149.45" y="591.55" width="8.7" height="9.1" fill="#C0C0C0" stroke="#DD3ADD" stroke-width="1.3" shape-rendering="geometricPrecision"/>
<rect x="1044.05" y="649.25" width="103.7" height="29.7" fill="#C0C0C0" stroke="#000" stroke-width="1.35" shape-rendering="geometricPrecision"/>
<text x="1095.8999999999999" y="667.1" font-family="Liberation Mono" font-size="8.4" font-weight="normal" text-anchor="middle" fill="#000" stroke="#000" stroke-width="0.2">HSR</text>
<rect x="1149.45" y="659.55" width="8.7" height="9.1" fill="#C0C0C0" stroke="#DD3ADD" stroke-width="1.3" shape-rendering="geometricPrecision"/>
<rect x="1044.05" y="712.15" width="103.7" height="29.7" fill="#C0C0C0" stroke="#000" stroke-width="1.35" shape-rendering="geometricPrecision"/>
<text x="1095.8999999999999" y="730.0" font-family="Liberation Mono" font-size="8.4" font-weight="normal" text-anchor="middle" fill="#000" stroke="#000" stroke-width="0.2">ASA</text>
<rect x="1149.45" y="722.4499999999999" width="8.7" height="9.1" fill="#C0C0C0" stroke="#DD3ADD" stroke-width="1.3" shape-rendering="geometricPrecision"/>
<rect x="1285.95" y="56.05" width="103.1" height="29.7" fill="#C0C0C0" stroke="#000" stroke-width="1.35" shape-rendering="geometricPrecision"/>
<text x="1337.5" y="73.89999999999999" font-family="Liberation Mono" font-size="8.4" font-weight="normal" text-anchor="middle" fill="#000" stroke="#000" stroke-width="0.2">DME1</text>
<rect x="1316.25" y="45.15" width="8.5" height="9.5" fill="#C0C0C0" stroke="#30A0A0" stroke-width="1.3" shape-rendering="geometricPrecision"/>
<rect x="1350.25" y="45.15" width="9.5" height="9.5" fill="#C0C0C0" stroke="#E8A040" stroke-width="1.3" shape-rendering="geometricPrecision"/>
<rect x="1275.95" y="57.85" width="8.9" height="9.5" fill="#C0C0C0" stroke="#706858" stroke-width="1.3" shape-rendering="geometricPrecision"/>
<rect x="1275.95" y="65.05" width="8.9" height="8.0" fill="#C0C0C0" stroke="#D8D860" stroke-width="1.3" shape-rendering="geometricPrecision"/>
<rect x="1275.95" y="73.85" width="8.9" height="9.3" fill="#C0C0C0" stroke="#DD44DD" stroke-width="1.3" shape-rendering="geometricPrecision"/>
<rect x="1390.55" y="65.95" width="9.4" height="9.9" fill="#C0C0C0" stroke="#2EA82E" stroke-width="1.3" shape-rendering="geometricPrecision"/>
<rect x="1284.05" y="122.25" width="103.7" height="29.3" fill="#C0C0C0" stroke="#000" stroke-width="1.35" shape-rendering="geometricPrecision"/>
<text x="1335.8999999999999" y="139.9" font-family="Liberation Mono" font-size="8.4" font-weight="normal" text-anchor="middle" fill="#000" stroke="#000" stroke-width="0.2">DME2</text>
<rect x="1274.05" y="124.05" width="8.9" height="9.5" fill="#C0C0C0" stroke="#706858" stroke-width="1.3" shape-rendering="geometricPrecision"/>
<rect x="1274.05" y="131.55" width="8.9" height="8.0" fill="#C0C0C0" stroke="#D8D860" stroke-width="1.3" shape-rendering="geometricPrecision"/>
<rect x="1274.05" y="140.05" width="8.9" height="9.7" fill="#C0C0C0" stroke="#DD44DD" stroke-width="1.3" shape-rendering="geometricPrecision"/>
<rect x="1284.05" y="185.15" width="103.7" height="30.0" fill="#C0C0C0" stroke="#000" stroke-width="1.35" shape-rendering="geometricPrecision"/>
<text x="1335.8999999999999" y="203.15" font-family="Liberation Mono" font-size="8.4" font-weight="normal" text-anchor="middle" fill="#000" stroke="#000" stroke-width="0.2">EGS</text>
<rect x="1274.05" y="195.35" width="8.9" height="8.9" fill="#C0C0C0" stroke="#D8D860" stroke-width="1.3" shape-rendering="geometricPrecision"/>
<rect x="1389.45" y="195.35" width="8.9" height="8.9" fill="#C0C0C0" stroke="#2EA82E" stroke-width="1.3" shape-rendering="geometricPrecision"/>
<rect x="1284.05" y="247.45" width="103.7" height="30.0" fill="#C0C0C0" stroke="#000" stroke-width="1.35" shape-rendering="geometricPrecision"/>
<text x="1335.8999999999999" y="265.45" font-family="Liberation Mono" font-size="8.4" font-weight="normal" text-anchor="middle" fill="#000" stroke="#000" stroke-width="0.2">DKG</text>
<rect x="1274.05" y="257.65" width="8.9" height="8.9" fill="#C0C0C0" stroke="#D8D860" stroke-width="1.3" shape-rendering="geometricPrecision"/>
<rect x="1389.45" y="257.65" width="8.9" height="8.9" fill="#C0C0C0" stroke="#2EA82E" stroke-width="1.3" shape-rendering="geometricPrecision"/>
<rect x="1284.05" y="304.95" width="103.7" height="30.0" fill="#C0C0C0" stroke="#000" stroke-width="1.35" shape-rendering="geometricPrecision"/>
<text x="1335.8999999999999" y="322.95" font-family="Liberation Mono" font-size="8.4" font-weight="normal" text-anchor="middle" fill="#000" stroke="#000" stroke-width="0.2">GWS</text>
<rect x="1274.05" y="315.15" width="8.9" height="8.9" fill="#C0C0C0" stroke="#D8D860" stroke-width="1.3" shape-rendering="geometricPrecision"/>
<rect x="1389.45" y="315.15" width="8.9" height="8.9" fill="#C0C0C0" stroke="#2EA82E" stroke-width="1.3" shape-rendering="geometricPrecision"/>
<rect x="1284.05" y="366.95" width="103.7" height="30.0" fill="#C0C0C0" stroke="#000" stroke-width="1.35" shape-rendering="geometricPrecision"/>
<text x="1335.8999999999999" y="384.95" font-family="Liberation Mono" font-size="8.4" font-weight="normal" text-anchor="middle" fill="#000" stroke="#000" stroke-width="0.2">TLC</text>
<rect x="1274.05" y="377.15" width="8.9" height="8.9" fill="#C0C0C0" stroke="#D8D860" stroke-width="1.3" shape-rendering="geometricPrecision"/>
<rect x="1284.05" y="429.75" width="103.7" height="30.0" fill="#C0C0C0" stroke="#000" stroke-width="1.35" shape-rendering="geometricPrecision"/>
<text x="1335.8999999999999" y="447.75" font-family="Liberation Mono" font-size="8.4" font-weight="normal" text-anchor="middle" fill="#000" stroke="#000" stroke-width="0.2">LMV</text>
<rect x="1274.05" y="439.95" width="8.9" height="8.9" fill="#C0C0C0" stroke="#D8D860" stroke-width="1.3" shape-rendering="geometricPrecision"/>
<rect x="1284.05" y="486.85" width="103.7" height="30.0" fill="#C0C0C0" stroke="#000" stroke-width="1.35" shape-rendering="geometricPrecision"/>
<text x="1335.8999999999999" y="504.85" font-family="Liberation Mono" font-size="8.4" font-weight="normal" text-anchor="middle" fill="#000" stroke="#000" stroke-width="0.2">EMF</text>
<rect x="1274.05" y="497.05" width="8.9" height="8.9" fill="#C0C0C0" stroke="#D8D860" stroke-width="1.3" shape-rendering="geometricPrecision"/>
<rect x="1498.05" y="111.05" width="103.7" height="30.700000000000003" fill="#C0C0C0" stroke="#000" stroke-width="1.35" shape-rendering="geometricPrecision"/>
<text x="1549.8999999999999" y="129.4" font-family="Liberation Mono" font-size="8.4" font-weight="normal" text-anchor="middle" fill="#000" stroke="#000" stroke-width="0.2">EKP</text>
<rect x="1488.15" y="122.35" width="8.7" height="8.3" fill="#C0C0C0" stroke="#2EA82E" stroke-width="1.3" shape-rendering="geometricPrecision"/>
<rect x="1488.25" y="335.95" width="103.7" height="29.2" fill="#C0C0C0" stroke="#000" stroke-width="1.35" shape-rendering="geometricPrecision"/>
<text x="1540.1" y="353.55" font-family="Liberation Mono" font-size="8.4" font-weight="normal" text-anchor="middle" fill="#000" stroke="#000" stroke-width="0.2">FA_CAN</text>
<rect x="1477.75" y="345.85" width="9.0" height="8.9" fill="#C0C0C0" stroke="#D8D860" stroke-width="1.3" shape-rendering="geometricPrecision"/>
<rect x="1290.05" y="554.95" width="102.5" height="30.3" fill="#C0C0C0" stroke="#000" stroke-width="1.35" shape-rendering="geometricPrecision"/>
<text x="1341.3" y="573.1" font-family="Liberation Mono" font-size="8.4" font-weight="normal" text-anchor="middle" fill="#000" stroke="#000" stroke-width="0.2">ICM-Q-L</text>
<rect x="1279.75" y="560.55" width="8.9" height="8.9" fill="#C0C0C0" stroke="#DD44DD" stroke-width="1.3" shape-rendering="geometricPrecision"/>
<rect x="1279.75" y="570.85" width="8.9" height="8.9" fill="#C0C0C0" stroke="#E8A040" stroke-width="1.3" shape-rendering="geometricPrecision"/>
<rect x="1393.95" y="566.05" width="8.9" height="8.9" fill="#C0C0C0" stroke="#A87858" stroke-width="1.3" shape-rendering="geometricPrecision"/>
<rect x="1471.95" y="554.95" width="103.7" height="30.3" fill="#C0C0C0" stroke="#000" stroke-width="1.35" shape-rendering="geometricPrecision"/>
<text x="1523.8" y="573.1" font-family="Liberation Mono" font-size="8.4" font-weight="normal" text-anchor="middle" fill="#000" stroke="#000" stroke-width="0.2">LRR</text>
<rect x="1461.75" y="566.0500000000001" width="8.7" height="8.9" fill="#C0C0C0" stroke="#A87858" stroke-width="1.3" shape-rendering="geometricPrecision"/>
<rect x="1471.95" y="617.65" width="103.7" height="30.3" fill="#C0C0C0" stroke="#000" stroke-width="1.35" shape-rendering="geometricPrecision"/>
<text x="1523.8" y="635.8" font-family="Liberation Mono" font-size="8.4" font-weight="normal" text-anchor="middle" fill="#000" stroke="#000" stroke-width="0.2">SRR_L</text>
<rect x="1461.75" y="628.75" width="8.7" height="8.9" fill="#C0C0C0" stroke="#A87858" stroke-width="1.3" shape-rendering="geometricPrecision"/>
<rect x="1471.95" y="674.65" width="103.7" height="30.3" fill="#C0C0C0" stroke="#000" stroke-width="1.35" shape-rendering="geometricPrecision"/>
<text x="1523.8" y="692.8" font-family="Liberation Mono" font-size="8.4" font-weight="normal" text-anchor="middle" fill="#000" stroke="#000" stroke-width="0.2">SRR_R</text>
<rect x="1461.75" y="685.75" width="8.7" height="8.9" fill="#C0C0C0" stroke="#A87858" stroke-width="1.3" shape-rendering="geometricPrecision"/>
</g>
<rect x="1547" y="39" width="16" height="720" fill="url(#sbV)" stroke="none" stroke-width="1" />
<rect x="1548" y="41" width="14.5" height="14.5" rx="2" fill="#B8C4D8" shape-rendering="geometricPrecision"/>
<rect x="1547.5" y="40.5" width="14" height="14" rx="2" fill="url(#btn)" stroke="#F4F8FF" stroke-width="1" shape-rendering="geometricPrecision"/>
<path d="M1551.0,49.5 L1554.5,46.0 L1558.0,49.5" fill="none" stroke="#4D6185" stroke-width="2" shape-rendering="geometricPrecision"/>
<rect x="1547.5" y="56.5" width="14" height="25" rx="2" fill="url(#btn)" stroke="#F4F8FF" stroke-width="1" shape-rendering="geometricPrecision"/>
<rect x="1551" y="65" width="7" height="1" fill="#8CA4E4" stroke="none" stroke-width="1" />
<rect x="1551" y="67" width="7" height="1" fill="#8CA4E4" stroke="none" stroke-width="1" />
<rect x="1551" y="69" width="7" height="1" fill="#8CA4E4" stroke="none" stroke-width="1" />
<rect x="1551" y="71" width="7" height="1" fill="#8CA4E4" stroke="none" stroke-width="1" />
<rect x="1548" y="744" width="14.5" height="14.5" rx="2" fill="#B8C4D8" shape-rendering="geometricPrecision"/>
<rect x="1547.5" y="743.5" width="14" height="14" rx="2" fill="url(#btn)" stroke="#F4F8FF" stroke-width="1" shape-rendering="geometricPrecision"/>
<path d="M1551.0,748.5 L1554.5,752.0 L1558.0,748.5" fill="none" stroke="#4D6185" stroke-width="2" shape-rendering="geometricPrecision"/>
<rect x="714" y="759" width="833" height="17" fill="url(#sbH)" stroke="none" stroke-width="1" />
<rect x="716" y="761.5" width="14.5" height="14.5" rx="2" fill="#B8C4D8" shape-rendering="geometricPrecision"/>
<rect x="715.5" y="761.0" width="14" height="14" rx="2" fill="url(#btn)" stroke="#F4F8FF" stroke-width="1" shape-rendering="geometricPrecision"/>
<path d="M724.5,764.5 L721.0,768.0 L724.5,771.5" fill="none" stroke="#4D6185" stroke-width="2" shape-rendering="geometricPrecision"/>
<rect x="735.5" y="760.5" width="27.5" height="15" rx="2" fill="url(#btn)" stroke="#F4F8FF" stroke-width="1" shape-rendering="geometricPrecision"/>
<rect x="745" y="764" width="1" height="7" fill="#8CA4E4" stroke="none" stroke-width="1" />
<rect x="747" y="764" width="1" height="7" fill="#8CA4E4" stroke="none" stroke-width="1" />
<rect x="749" y="764" width="1" height="7" fill="#8CA4E4" stroke="none" stroke-width="1" />
<rect x="751" y="764" width="1" height="7" fill="#8CA4E4" stroke="none" stroke-width="1" />
<rect x="1531" y="761.5" width="14.5" height="14.5" rx="2" fill="#B8C4D8" shape-rendering="geometricPrecision"/>
<rect x="1530.5" y="761.0" width="14" height="14" rx="2" fill="url(#btn)" stroke="#F4F8FF" stroke-width="1" shape-rendering="geometricPrecision"/>
<path d="M1535.5,764.5 L1539.0,768.0 L1535.5,771.5" fill="none" stroke="#4D6185" stroke-width="2" shape-rendering="geometricPrecision"/>
<rect x="1547" y="759" width="16" height="17" fill="#ECE9D8" stroke="none" stroke-width="1" />
<rect x="1563.5" y="37" width="5" height="745" fill="#0A4EDE" stroke="none" stroke-width="1" />
<rect x="701" y="777.5" width="867" height="5" fill="#0A4EDE" stroke="none" stroke-width="1" />
<rect x="707" y="776" width="856" height="1.5" fill="#F6F4EC" stroke="none" stroke-width="1" />
</svg></body></html>
